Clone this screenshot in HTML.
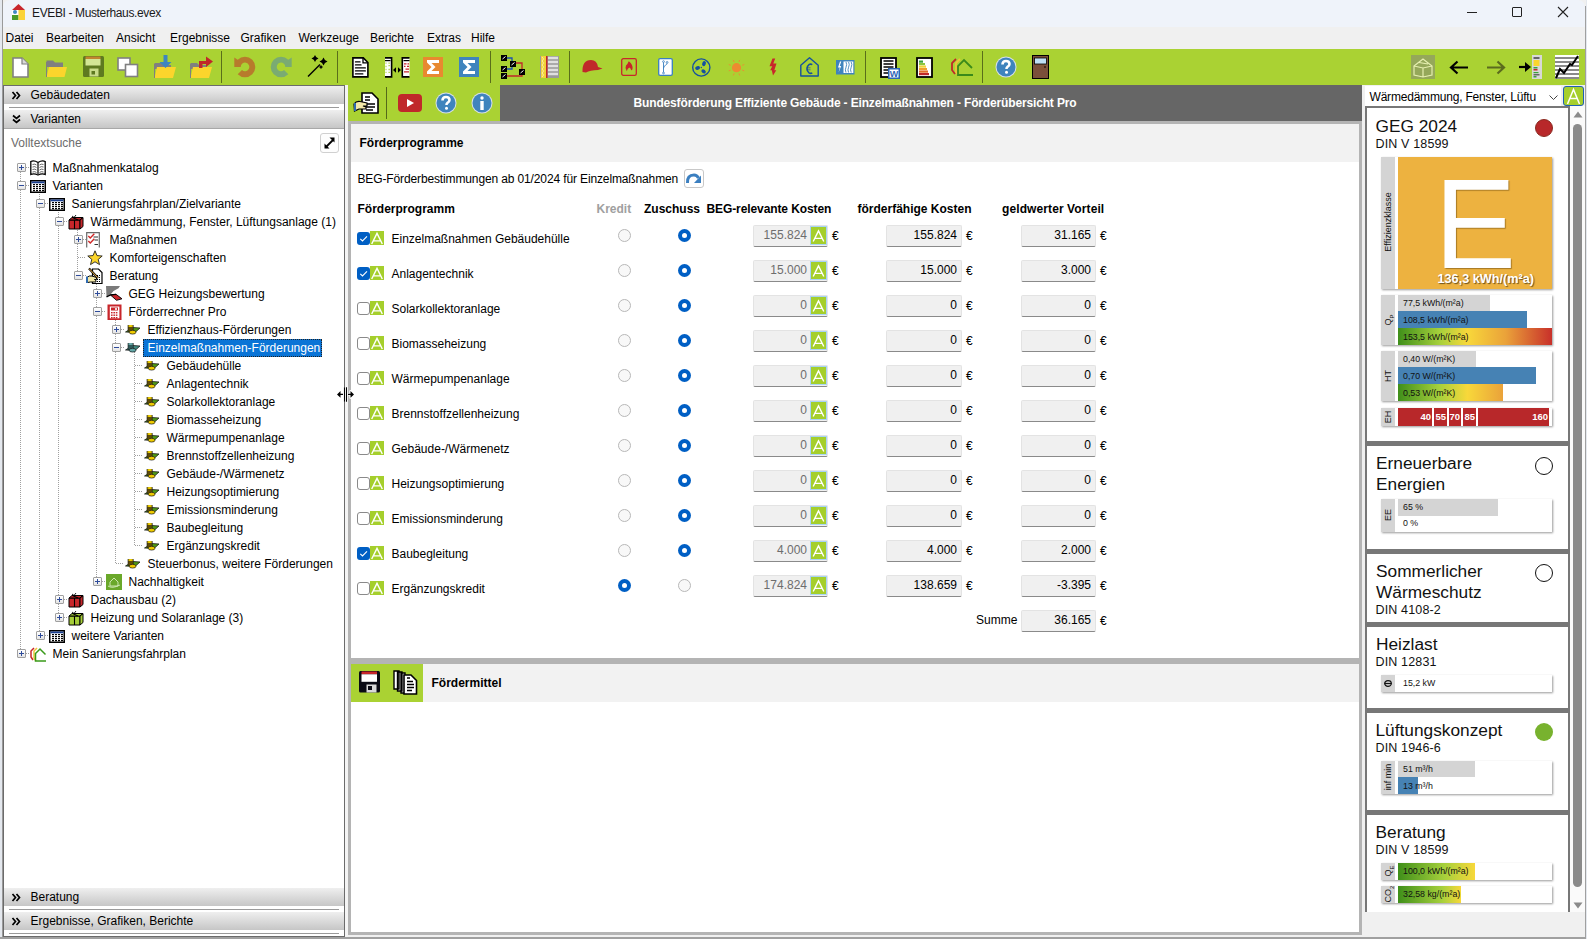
<!DOCTYPE html>
<html><head><meta charset="utf-8">
<style>
*{box-sizing:border-box;margin:0;padding:0}
html,body{width:1587px;height:939px;overflow:hidden;background:#f0f0f0;font-family:"Liberation Sans",sans-serif;font-size:12px;color:#000}
.a{position:absolute}
.t{position:absolute;white-space:nowrap}
svg{position:absolute;overflow:visible}
</style></head><body>
<div class="a" style="left:0px;top:0px;width:3px;height:939px;background:#e4e8ee"></div>
<div class="a" style="left:2px;top:0px;width:1px;height:937px;background:#9a9a9a"></div>
<div class="a" style="left:3px;top:0px;width:1582px;height:27px;background:#eff3fa;border-top-right-radius:7px;border-top-left-radius:7px"></div>
<div class="a" style="left:3px;top:27px;width:1582px;height:22px;background:#f0f0f0"></div>
<div class="a" style="left:3px;top:49px;width:1582px;height:36px;background:#aad233"></div>
<div class="a" style="left:348px;top:85px;width:152px;height:36px;background:#aad233"></div>
<div class="a" style="left:500px;top:85px;width:862px;height:36px;background:#666666"></div>
<div class="a" style="left:0px;top:937px;width:1587px;height:2px;background:#a0a0a0"></div>
<svg style="left:12px;top:4px" width="13" height="16" viewBox="0 0 13 16"><path d="M6.5 0 L13 6 L0 6 Z" fill="#c8262b"/><rect x="0" y="6" width="6.5" height="5" fill="#fff"/><circle cx="3" cy="8" r="2" fill="#3f88c5"/><rect x="0" y="11" width="6.5" height="5" fill="#4a9a2a"/><rect x="6.5" y="6" width="6.5" height="10" fill="#fbd338"/></svg>
<div class="t" style="left:32px;top:7.00px;font-size:12px;line-height:12px;font-weight:400;color:#1a1a1a;letter-spacing:-0.37px">EVEBI - Musterhaus.evex</div>
<div class="a" style="left:1467px;top:12px;width:10px;height:1px;background:#222"></div>
<div class="a" style="left:1512px;top:7px;width:10px;height:10px;border:1px solid #222;border-radius:1px"></div>
<svg style="left:1558px;top:7px" width="10" height="10" viewBox="0 0 10 10"><path d="M0 0L10 10M10 0L0 10" stroke="#222" stroke-width="1.1"/></svg>
<div class="t" style="left:5.5px;top:32.00px;font-size:12px;line-height:12px;font-weight:400;color:#000;">Datei</div>
<div class="t" style="left:46px;top:32.00px;font-size:12px;line-height:12px;font-weight:400;color:#000;">Bearbeiten</div>
<div class="t" style="left:116px;top:32.00px;font-size:12px;line-height:12px;font-weight:400;color:#000;">Ansicht</div>
<div class="t" style="left:170px;top:32.00px;font-size:12px;line-height:12px;font-weight:400;color:#000;">Ergebnisse</div>
<div class="t" style="left:240.5px;top:32.00px;font-size:12px;line-height:12px;font-weight:400;color:#000;">Grafiken</div>
<div class="t" style="left:298.5px;top:32.00px;font-size:12px;line-height:12px;font-weight:400;color:#000;">Werkzeuge</div>
<div class="t" style="left:370px;top:32.00px;font-size:12px;line-height:12px;font-weight:400;color:#000;">Berichte</div>
<div class="t" style="left:427px;top:32.00px;font-size:12px;line-height:12px;font-weight:400;color:#000;">Extras</div>
<div class="t" style="left:471px;top:32.00px;font-size:12px;line-height:12px;font-weight:400;color:#000;">Hilfe</div>
<svg style="left:12px;top:57px" width="17" height="21" viewBox="0 0 17 21"><path d="M1 1H10L16 7V20H1Z" fill="#fff" stroke="#808080" stroke-width="1.6"/><path d="M10 1V7H16" fill="#d8d8d8" stroke="#808080" stroke-width="1.2"/></svg>
<svg style="left:46px;top:60px" width="22" height="18" viewBox="0 0 22 18"><path d="M0.5 0.5H7L9 2.5H17V7H0.5Z" fill="#808080"/><path d="M3 7H21L18.5 17H0.5Z" fill="#fbd52c"/><path d="M0.5 2V17" stroke="#808080"/></svg>
<svg style="left:83px;top:56px" width="21" height="21" viewBox="0 0 21 21"><rect x="0" y="0" width="21" height="21" rx="1.5" fill="#5e7a20"/><rect x="2.5" y="0.5" width="15" height="2.5" fill="#c2842f"/><rect x="2.5" y="3" width="15" height="6.5" fill="#d3e695"/><rect x="6.5" y="12.5" width="9" height="8" fill="#c9dc8a"/><rect x="8.5" y="15" width="3.5" height="3.5" fill="#5e7a20"/></svg>
<svg style="left:117px;top:57px" width="22" height="21" viewBox="0 0 22 21"><rect x="1" y="1" width="12" height="12" fill="#fff" stroke="#808080" stroke-width="1.6"/><rect x="8.5" y="7.5" width="12" height="12" fill="#fff" stroke="#808080" stroke-width="1.6"/></svg>
<svg style="left:154px;top:55px" width="23" height="24" viewBox="0 0 23 24"><path d="M0.5 8H7L9 10H17V14H0.5Z" fill="#808080"/><path d="M3 12H22L19 23H0.5Z" fill="#fbd52c"/><path d="M0.5 9V23" stroke="#808080"/><path d="M9.5 0H13.5V7H17.5L11.5 13L5.5 7H9.5Z" fill="#3d85c0"/></svg>
<svg style="left:190px;top:55px" width="24" height="24" viewBox="0 0 24 24"><path d="M0.5 8H7L9 10H17V14H0.5Z" fill="#808080"/><path d="M3 12H22L19 23H0.5Z" fill="#fbd52c"/><path d="M0.5 9V23" stroke="#808080"/><path d="M9 13V6H16V1.5L23 6.5L16 12V9H12.5V13Z" fill="#c0282a"/></svg>
<div class="a" style="left:221px;top:51px;width:1px;height:32px;background:#5a6e1a"></div>
<svg style="left:233px;top:56px" width="23" height="22" viewBox="0 0 23 22"><path d="M1.3 1.5L4.7 3.7A10.3 10.3 0 1 1 4.7 18.3L9 14A4.3 4.3 0 1 0 7.7 11H1.3Z" fill="#b77b2c"/></svg>
<svg style="left:270px;top:56px" width="23" height="22" viewBox="0 0 23 22"><g transform="translate(23,0) scale(-1,1)"><path d="M1.3 1.5L4.7 3.7A10.3 10.3 0 1 1 4.7 18.3L9 14A4.3 4.3 0 1 0 7.7 11H1.3Z" fill="#7aab72"/></g></svg>
<svg style="left:307px;top:55px" width="22" height="24" viewBox="0 0 22 24"><path d="M1 21.5L13 9.5" stroke="#000" stroke-width="1.5"/><path d="M8 0.0Q8.8 2.7 11.5 3.5Q8.8 4.3 8 7.0Q7.2 4.3 4.5 3.5Q7.2 2.7 8 0.0Z M16.5 2.5Q17.4 5.6 20.5 6.5Q17.4 7.4 16.5 10.5Q15.6 7.4 12.5 6.5Q15.6 5.6 16.5 2.5Z M14 9.8Q14.5 11.5 16.2 12Q14.5 12.5 14 14.2Q13.5 12.5 11.8 12Q13.5 11.5 14 9.8Z" fill="#000"/></svg>
<div class="a" style="left:337px;top:51px;width:1px;height:32px;background:#5a6e1a"></div>
<svg style="left:352px;top:57px" width="17" height="21" viewBox="0 0 17 21"><path d="M0.9 0.9H11.3L15.9 5.5V19.9H0.9Z" fill="#fff" stroke="#000" stroke-width="1.6"/><path d="M11 1V5.8H15.8" fill="none" stroke="#000" stroke-width="1.3"/><path d="M3.5 4.9H8M3.5 7.9H9M3.5 10.9H13.3M3.5 13.9H13.3M3.5 16.9H10.8" stroke="#000" stroke-width="1.4" stroke-linecap="round"/></svg>
<svg style="left:385px;top:57px" width="25" height="21" viewBox="0 0 25 21"><path d="M0 0.9H6.6V19.9H0" fill="#fff" stroke="#000" stroke-width="1.6"/><path d="M0 3.6H5.5" stroke="#000" stroke-width="1.2"/><path d="M0.5 6.2H1.5M3.5 6.2H4.8M0.5 9.5H1.5M3.5 8.7H4.8M0.5 12.5H1.5M3.5 12.5H4.8M0.5 15.3H1.5M3.5 15.3H4.8" stroke="#a6ce39" stroke-width="1.3"/><path d="M24.5 0.9H17.3V19.9H24.5" fill="#fff" stroke="#000" stroke-width="1.6"/><path d="M18.5 3.6H24.5" stroke="#000" stroke-width="1.2"/><path d="M19 6.8H21.5M22.5 6.8H24M19 9.3H20.5M22 9.3H24M20.5 12.2H24M19 14.8H24" stroke="#c8262b" stroke-width="1.3"/><path d="M8 13L11 10.2V15.8Z M16 13L13 10.2V15.8Z" fill="#000"/></svg>
<svg style="left:423px;top:57px" width="20" height="20" viewBox="0 0 20 20"><rect width="20" height="20" fill="#e8892f"/><path d="M4 3H16V6H8.5L12.5 10L8.5 14H16V17H4V14.5L8.5 10L4 5.5Z" fill="#fff"/></svg>
<svg style="left:459px;top:57px" width="20" height="20" viewBox="0 0 20 20"><rect width="20" height="20" fill="#3f84bd"/><path d="M4 3H16V6H8.5L12.5 10L8.5 14H16V17H4V14.5L8.5 10L4 5.5Z" fill="#fff"/></svg>
<div class="a" style="left:490px;top:51px;width:1px;height:32px;background:#5a6e1a"></div>
<svg style="left:501px;top:55px" width="24" height="24" viewBox="0 0 24 24"><path d="M3 3H11V10H12 M3 14H11V10" fill="none" stroke="#1d4fb0" stroke-width="1.3"/><path d="M13 8H21V16 M3 21H21V17" fill="none" stroke="#c0282a" stroke-width="1.3"/><rect x="0" y="0" width="6" height="6" fill="#000"/><rect x="9" y="6" width="6" height="6" fill="#000"/><rect x="0" y="11" width="6" height="6" fill="#000"/><rect x="18" y="14" width="6" height="6" fill="#000"/><rect x="0" y="18" width="6" height="6" fill="#000"/><path d="M1.5 4L4.5 1.5M10.5 10L13.5 7.5M1.5 15L4.5 12.5M19.5 18L22.5 15.5M1.5 22L4.5 19.5" stroke="#fff" stroke-width="1"/></svg>
<svg style="left:540px;top:56px" width="19" height="22" viewBox="0 0 19 22"><rect x="0" y="0" width="19" height="22" fill="#9a9a9a"/><rect x="1" y="0" width="5" height="22" fill="#f1d23a"/><path d="M2 1Q5 3 2 5Q5 7 2 9Q5 11 2 13Q5 15 2 17Q5 19 2 21" fill="none" stroke="#fff2a0" stroke-width="1"/><rect x="6" y="0" width="1.5" height="22" fill="#c0282a"/><path d="M8 2H18M8 6H18M8 10H18M8 14H18M8 18H18" stroke="#e0e0e0" stroke-width="2.5"/></svg>
<div class="a" style="left:569px;top:51px;width:1px;height:32px;background:#5a6e1a"></div>
<svg style="left:582px;top:59px" width="21" height="14" viewBox="0 0 21 14"><path d="M0.5 13Q0 1 9 1Q15 1 16 8L20.5 9.5L16 11Q8 11 4 13.5Z" fill="#c0282a"/></svg>
<svg style="left:621px;top:58px" width="16" height="18" viewBox="0 0 16 18"><rect x="0.7" y="0.7" width="14.6" height="16.6" rx="1.6" fill="none" stroke="#c8262b" stroke-width="1.3"/><path d="M7.8 3.2Q12.3 6.5 11.5 11.2L10.3 12.6Q9.8 10.3 8.3 9.6Q6.3 11 5.8 13.2Q3.6 10.4 5 7.6Q6.8 5.6 7.8 3.2Z" fill="#c8262b"/></svg>
<svg style="left:658px;top:58px" width="15" height="18" viewBox="0 0 15 18"><rect x="0.7" y="0.7" width="13.6" height="16.6" rx="1.4" fill="#fff" stroke="#3b7fc0" stroke-width="1.3"/><path d="M5.5 4.5V14.2M5.5 10.5Q5.5 8.3 7.5 7.3Q9 6.5 9 5.3" fill="none" stroke="#3b7fc0" stroke-width="0.9"/><circle cx="5.5" cy="3.6" r="0.9" fill="none" stroke="#3b7fc0" stroke-width="0.8"/><circle cx="5.5" cy="15" r="0.9" fill="none" stroke="#3b7fc0" stroke-width="0.8"/><circle cx="9.1" cy="4.4" r="0.9" fill="none" stroke="#3b7fc0" stroke-width="0.8"/></svg>
<svg style="left:692px;top:58px" width="19" height="19" viewBox="0 0 19 19"><circle cx="9.3" cy="9.5" r="8.6" fill="none" stroke="#1550a0" stroke-width="1.4"/><ellipse cx="12" cy="5.6" rx="1.8" ry="2.6" transform="rotate(20 12 5.6)" fill="#1550a0"/><ellipse cx="5.6" cy="10" rx="2.5" ry="1.8" transform="rotate(-20 5.6 10)" fill="#1550a0"/><ellipse cx="11.6" cy="13.4" rx="2.4" ry="1.8" transform="rotate(40 11.6 13.4)" fill="#1550a0"/><circle cx="9.3" cy="9.5" r="0.7" fill="#1550a0"/></svg>
<svg style="left:728px;top:58px" width="18" height="19" viewBox="0 0 18 19"><circle cx="8.5" cy="9.7" r="4.6" fill="#ee8a30"/><path d="M14.23 12.07L16.26 12.91M10.87 15.43L11.71 17.46M6.13 15.43L5.29 17.46M2.77 12.07L0.74 12.91M2.77 7.33L0.74 6.49M6.13 3.97L5.29 1.94M10.87 3.97L11.71 1.94M14.23 7.33L16.26 6.49" stroke="#ee8a30" stroke-width="0.9"/></svg>
<svg style="left:768px;top:58px" width="10" height="18" viewBox="0 0 10 18"><path d="M4.5 0.5L1.5 8.2H4.3L2.2 12.2H3.8L5 17.5L8.3 12.2H6.3L8.5 5.5H5.3L7.2 0.5Z" fill="#c8262b"/></svg>
<svg style="left:800px;top:57px" width="19" height="20" viewBox="0 0 19 20"><path d="M0.8 19V8.2L9.5 0.8L18.2 8.2V19Z" fill="none" stroke="#1550a0" stroke-width="1.4" stroke-linejoin="round"/><path d="M12.3 7.6Q10.5 6.7 9 7.7Q7 9.2 7 11.8Q7 14.4 9 15.9Q10.5 16.8 12.3 16" fill="none" stroke="#1550a0" stroke-width="1.6"/><path d="M6.5 10.8H10.5M6.5 12.8H10.5" stroke="#1550a0" stroke-width="0.7"/></svg>
<svg style="left:836px;top:60px" width="19" height="15" viewBox="0 0 19 15"><rect width="18.5" height="14.5" fill="#3f84bd"/><path d="M4 1.5L2 7.5H3.8L2.6 12.5L5.2 6H3.7L5.3 1.5Z" fill="#fff"/><rect x="7.5" y="1.5" width="9.8" height="11.5" fill="#fff"/><path d="M10 2Q11.3 4.5 10 7.2Q8.7 9.8 10 12.5M12.6 2Q13.9 4.5 12.6 7.2Q11.3 9.8 12.6 12.5M15.2 2Q16.5 4.5 15.2 7.2Q13.9 9.8 15.2 12.5" fill="none" stroke="#3f84bd" stroke-width="0.9"/></svg>
<div class="a" style="left:865px;top:51px;width:1px;height:32px;background:#5a6e1a"></div>
<svg style="left:880px;top:57px" width="20" height="22" viewBox="0 0 20 22"><rect x="1" y="1" width="15" height="19" fill="#fff" stroke="#000" stroke-width="1.8"/><path d="M3.5 4H13.5M3.5 7H13.5M3.5 10H13.5M3.5 13H8M3.5 16H8" stroke="#000" stroke-width="1.6"/><rect x="8" y="11" width="12" height="11" fill="#2d66b5"/><rect x="9" y="12" width="10" height="9" fill="#fff" stroke="#2d66b5"/><text x="14" y="20" font-size="9" font-weight="700" font-family="Liberation Sans" fill="#2d66b5" text-anchor="middle">W</text></svg>
<svg style="left:916px;top:57px" width="17" height="21" viewBox="0 0 17 21"><rect x="1" y="1" width="15" height="19" fill="#fff" stroke="#000" stroke-width="1.8"/><rect x="3" y="3.5" width="4" height="2.2" fill="#3aa23a"/><rect x="3" y="6" width="6" height="2.2" fill="#8dc63f"/><rect x="3" y="8.5" width="7" height="2.2" fill="#f1d23a"/><rect x="3" y="11" width="8" height="2.2" fill="#f0a030"/><rect x="3" y="13.5" width="9" height="2.2" fill="#e36c2a"/><rect x="3" y="16" width="10" height="2.2" fill="#c0282a"/></svg>
<svg style="left:950px;top:57px" width="24" height="20" viewBox="0 0 24 20"><path d="M6 2L2 6V13L5 17" fill="none" stroke="#c0282a" stroke-width="1.8"/><path d="M10 2L6 6V15L9 19" fill="none" stroke="#f1c43a" stroke-width="1.8"/><path d="M22 11L14 3L8 9V18H23" fill="none" stroke="#3a8a1a" stroke-width="1.8"/></svg>
<div class="a" style="left:982px;top:51px;width:1px;height:32px;background:#5a6e1a"></div>
<svg style="left:995px;top:56px" width="22" height="22" viewBox="0 0 22 22"><circle cx="11" cy="11" r="10.5" fill="#d8e0e8"/><circle cx="11" cy="11" r="9.5" fill="#3f84bd"/><path d="M7.5 8.5Q7.5 5 11 5Q14.5 5 14.5 8Q14.5 10 12.3 11Q11.5 11.5 11.5 13" fill="none" stroke="#fff" stroke-width="2.6"/><circle cx="11.5" cy="16.3" r="1.5" fill="#fff"/></svg>
<svg style="left:1032px;top:55px" width="17" height="24" viewBox="0 0 17 24"><rect x="0.5" y="0.5" width="16" height="23" fill="#7a4f3a" stroke="#000" stroke-width="1"/><rect x="2.5" y="3" width="12" height="6" fill="#bfe0f5" stroke="#000" stroke-width="0.8"/><path d="M12 12H14" stroke="#000" stroke-width="1"/></svg>
<svg style="left:1411px;top:55px" width="24" height="24" viewBox="0 0 24 24"><rect width="24" height="24" fill="#95a85a"/><path d="M3 11L12 4L21 11V20L12 22L3 20Z M3 11L12 13L21 11 M12 13V22 M8 7.5L17 9" fill="none" stroke="#e6efb0" stroke-width="1.2"/></svg>
<svg style="left:1449px;top:60px" width="20" height="15" viewBox="0 0 20 15"><path d="M19 7.5H3M8.5 1.5L2 7.5L8.5 13.5" fill="none" stroke="#000" stroke-width="2.2"/></svg>
<svg style="left:1486px;top:60px" width="20" height="15" viewBox="0 0 20 15"><path d="M1 7.5H17M11.5 1.5L18 7.5L11.5 13.5" fill="none" stroke="#5b6b1e" stroke-width="2.2"/></svg>
<svg style="left:1519px;top:55px" width="24" height="24" viewBox="0 0 24 24"><path d="M0 12H7" stroke="#000" stroke-width="2.2"/><path d="M6 7L12 12L6 17Z" fill="#000"/><rect x="13" y="0" width="10" height="24" fill="#d8d8d8"/><rect x="14.5" y="2" width="6" height="2" fill="#666"/><rect x="14.5" y="5" width="6" height="6" fill="#fbd52c"/><rect x="14.5" y="12" width="4" height="1.5" fill="#3aa23a"/><rect x="14.5" y="14" width="4" height="1.5" fill="#c0282a"/><rect x="14.5" y="17" width="5" height="1.2" fill="#3aa23a"/><rect x="14.5" y="19" width="6" height="1.5" fill="#666"/><rect x="14.5" y="21" width="3" height="1.5" fill="#3aa23a"/></svg>
<svg style="left:1555px;top:55px" width="25" height="24" viewBox="0 0 25 24"><rect width="24" height="24" fill="#fff"/><path d="M0 3H24M0 7H24M0 11H24M0 15H24M0 19H24M0 23H24" stroke="#8a8a8a" stroke-width="1.8"/><path d="M1 23L5 14L9 18L15 9L17 10L23 1" fill="none" stroke="#000" stroke-width="2"/></svg>
<svg style="left:354px;top:92px" width="25" height="22" viewBox="0 0 25 22"><path d="M8 1H18L24 7V21H8Z" fill="#fff" stroke="#000" stroke-width="1.6"/><path d="M11 5H16M11 8H16M12 12H21M12 15H21M12 18H19" stroke="#000" stroke-width="1.3"/><path d="M0 12Q2 9 6 9.5L13 11V14H9L12 15V17H5L0.5 19Z" fill="#f3e8a8" stroke="#000" stroke-width="1.2"/><rect x="0" y="11" width="2" height="8" fill="#2f6ab0"/></svg>
<div class="a" style="left:386px;top:87px;width:1px;height:32px;background:#55691a"></div>
<svg style="left:398px;top:94px" width="24" height="18" viewBox="0 0 24 18"><rect width="24" height="18" rx="4" fill="#c0282a"/><path d="M9 5L16 9L9 13Z" fill="#fff"/></svg>
<svg style="left:435px;top:92px" width="22" height="22" viewBox="0 0 22 22"><circle cx="11" cy="11" r="10.5" fill="#d8e0e8"/><circle cx="11" cy="11" r="9.5" fill="#3f84bd"/><path d="M7.5 8.5Q7.5 5 11 5Q14.5 5 14.5 8Q14.5 10 12.3 11Q11.5 11.5 11.5 13" fill="none" stroke="#fff" stroke-width="2.6"/><circle cx="11.5" cy="16.3" r="1.5" fill="#fff"/></svg>
<svg style="left:471px;top:92px" width="22" height="22" viewBox="0 0 22 22"><circle cx="11" cy="11" r="10.5" fill="#d8e0e8"/><circle cx="11" cy="11" r="9.5" fill="#3f84bd"/><circle cx="11" cy="6" r="1.7" fill="#fff"/><rect x="9.3" y="9" width="3.4" height="9" fill="#fff"/></svg>
<div class="a" style="left:3px;top:85px;width:342px;height:852px;background:#fff;border:1px solid #6b6b6b"></div>
<div class="a" style="left:345px;top:85px;width:3px;height:852px;background:#f4f4f4"></div>
<div class="a" style="left:4px;top:86px;width:340px;height:18px;background:linear-gradient(#efefef,#c6c6c6)"></div><div class="a" style="left:9px;top:107px;width:330px;height:1px;background:#9a9a9a"></div><svg style="left:12px;top:91px" width="10" height="9" viewBox="0 0 10 9"><path d="M0.5 1L3.5 4.5L0.5 8M4.5 1L7.5 4.5L4.5 8" fill="none" stroke="#000" stroke-width="1.7"/></svg><div class="t" style="left:30.5px;top:89.00px;font-size:12px;line-height:12px;font-weight:400;color:#000;">Gebäudedaten</div>
<div class="a" style="left:4px;top:110px;width:340px;height:18px;background:linear-gradient(#efefef,#c6c6c6)"></div><div class="a" style="left:9px;top:131px;display:none;width:330px;height:1px;background:#9a9a9a"></div><svg style="left:12px;top:115px" width="9" height="9" viewBox="0 0 9 9"><path d="M1 0.5L4.5 3.5L8 0.5M1 4.5L4.5 7.5L8 4.5" fill="none" stroke="#000" stroke-width="1.7"/></svg><div class="t" style="left:30.5px;top:113.00px;font-size:12px;line-height:12px;font-weight:400;color:#000;">Varianten</div>
<div class="a" style="left:4px;top:128px;width:340px;height:1px;background:#a8a8a8"></div>
<div class="a" style="left:4px;top:888px;width:340px;height:18px;background:linear-gradient(#efefef,#c6c6c6)"></div><div class="a" style="left:9px;top:909px;width:330px;height:1px;background:#9a9a9a"></div><svg style="left:12px;top:893px" width="10" height="9" viewBox="0 0 10 9"><path d="M0.5 1L3.5 4.5L0.5 8M4.5 1L7.5 4.5L4.5 8" fill="none" stroke="#000" stroke-width="1.7"/></svg><div class="t" style="left:30.5px;top:891.00px;font-size:12px;line-height:12px;font-weight:400;color:#000;">Beratung</div>
<div class="a" style="left:4px;top:912px;width:340px;height:18px;background:linear-gradient(#efefef,#c6c6c6)"></div><div class="a" style="left:9px;top:933px;width:330px;height:1px;background:#9a9a9a"></div><svg style="left:12px;top:917px" width="10" height="9" viewBox="0 0 10 9"><path d="M0.5 1L3.5 4.5L0.5 8M4.5 1L7.5 4.5L4.5 8" fill="none" stroke="#000" stroke-width="1.7"/></svg><div class="t" style="left:30.5px;top:915.00px;font-size:12px;line-height:12px;font-weight:400;color:#000;">Ergebnisse, Grafiken, Berichte</div>
<div class="t" style="left:11px;top:137.00px;font-size:12px;line-height:12px;font-weight:400;color:#6d6d6d;">Volltextsuche</div>
<div class="a" style="left:320px;top:133px;width:19px;height:20px;border:1px solid #d0d0d0;border-radius:3px;background:#fdfdfd"></div>
<svg style="left:324px;top:137px" width="11" height="12" viewBox="0 0 11 12"><path d="M1.5 10.5L9.5 2.5" stroke="#000" stroke-width="1.8"/><path d="M0.5 6.5V11.5H5.5Z M10.5 5.5V0.5H5.5Z" fill="#000"/></svg>
<div class="a" style="left:39px;top:190px;width:1px;height:446px;background:repeating-linear-gradient(to bottom,#a0a0a0 0,#a0a0a0 1px,transparent 1px,transparent 2px)"></div>
<div class="a" style="left:58px;top:208px;width:1px;height:410px;background:repeating-linear-gradient(to bottom,#a0a0a0 0,#a0a0a0 1px,transparent 1px,transparent 2px)"></div>
<div class="a" style="left:77px;top:226px;width:1px;height:50px;background:repeating-linear-gradient(to bottom,#a0a0a0 0,#a0a0a0 1px,transparent 1px,transparent 2px)"></div>
<div class="a" style="left:96px;top:280px;width:1px;height:302px;background:repeating-linear-gradient(to bottom,#a0a0a0 0,#a0a0a0 1px,transparent 1px,transparent 2px)"></div>
<div class="a" style="left:115px;top:316px;width:1px;height:248px;background:repeating-linear-gradient(to bottom,#a0a0a0 0,#a0a0a0 1px,transparent 1px,transparent 2px)"></div>
<div class="a" style="left:134px;top:352px;width:1px;height:194px;background:repeating-linear-gradient(to bottom,#a0a0a0 0,#a0a0a0 1px,transparent 1px,transparent 2px)"></div>
<div class="a" style="left:20px;top:172px;width:1px;height:477px;background:repeating-linear-gradient(to bottom,#a0a0a0 0,#a0a0a0 1px,transparent 1px,transparent 2px)"></div>
<div class="a" style="left:26px;top:167px;width:3px;height:1px;background:repeating-linear-gradient(to right,#a0a0a0 0,#a0a0a0 1px,transparent 1px,transparent 2px)"></div>
<div class="a" style="left:17px;top:163px;width:9px;height:9px;border:1px solid #a0a0a0;border-radius:1px;background:linear-gradient(#fff,#e4e4e4)"></div><div class="a" style="left:19px;top:167px;width:5px;height:1px;background:#2e4b9a"></div><div class="a" style="left:21px;top:165px;width:1px;height:5px;background:#2e4b9a"></div>
<svg style="left:30px;top:160px" width="16" height="16" viewBox="0 0 16 16"><path d="M8 2.5Q4 0 0.8 1.5V14.5Q4 13 8 15Q12 13 15.2 14.5V1.5Q12 0 8 2.5Z" fill="#fff" stroke="#000" stroke-width="1.3"/><path d="M8 2.5V15" stroke="#333" stroke-width="1.5"/><path d="M2.5 4.5Q5 3.5 6.5 5M2.5 7Q5 6 6.5 7.5M2.5 9.5Q5 8.5 6.5 10M2.5 12Q5 11 6.5 12.5M9.5 5Q11 3.5 13.5 4.5M9.5 7.5Q11 6 13.5 7M9.5 10Q11 8.5 13.5 9.5M9.5 12.5Q11 11 13.5 12" fill="none" stroke="#444" stroke-width="0.8"/></svg>
<div class="t" style="left:52.5px;top:162.00px;font-size:12px;line-height:12px;font-weight:400;color:#000;">Maßnahmenkatalog</div>
<div class="a" style="left:26px;top:185px;width:3px;height:1px;background:repeating-linear-gradient(to right,#a0a0a0 0,#a0a0a0 1px,transparent 1px,transparent 2px)"></div>
<div class="a" style="left:17px;top:181px;width:9px;height:9px;border:1px solid #a0a0a0;border-radius:1px;background:linear-gradient(#fff,#e4e4e4)"></div><div class="a" style="left:19px;top:185px;width:5px;height:1px;background:#2e4b9a"></div>
<svg style="left:30px;top:180px" width="16" height="14" viewBox="0 0 16 14"><rect x="0.75" y="0.75" width="14.5" height="11.5" fill="#fff" stroke="#000" stroke-width="1.5"/><rect x="1.5" y="1.5" width="13" height="1.8" fill="#1a3f8f"/><rect x="3" y="4" width="2" height="1.2" fill="#000"/><rect x="6" y="4" width="2" height="1.2" fill="#000"/><rect x="9" y="4" width="2" height="1.2" fill="#000"/><rect x="12" y="4" width="2" height="1.2" fill="#000"/><rect x="3" y="6" width="2" height="1.2" fill="#000"/><rect x="6" y="6" width="2" height="1.2" fill="#000"/><rect x="9" y="6" width="2" height="1.2" fill="#000"/><rect x="12" y="6" width="2" height="1.2" fill="#000"/><rect x="3" y="8" width="2" height="1.2" fill="#000"/><rect x="6" y="8" width="2" height="1.2" fill="#000"/><rect x="9" y="8" width="2" height="1.2" fill="#000"/><rect x="12" y="8" width="2" height="1.2" fill="#000"/><rect x="3" y="10" width="2" height="1.2" fill="#000"/><rect x="6" y="10" width="2" height="1.2" fill="#000"/><rect x="9" y="10" width="2" height="1.2" fill="#000"/><rect x="12" y="10" width="2" height="1.2" fill="#000"/></svg>
<div class="t" style="left:52.5px;top:180.00px;font-size:12px;line-height:12px;font-weight:400;color:#000;">Varianten</div>
<div class="a" style="left:45px;top:203px;width:3px;height:1px;background:repeating-linear-gradient(to right,#a0a0a0 0,#a0a0a0 1px,transparent 1px,transparent 2px)"></div>
<div class="a" style="left:36px;top:199px;width:9px;height:9px;border:1px solid #a0a0a0;border-radius:1px;background:linear-gradient(#fff,#e4e4e4)"></div><div class="a" style="left:38px;top:203px;width:5px;height:1px;background:#2e4b9a"></div>
<svg style="left:49px;top:198px" width="16" height="14" viewBox="0 0 16 14"><rect x="0.75" y="0.75" width="14.5" height="11.5" fill="#fff" stroke="#000" stroke-width="1.5"/><rect x="1.5" y="1.5" width="13" height="1.8" fill="#1a3f8f"/><rect x="3" y="4" width="2" height="1.2" fill="#000"/><rect x="6" y="4" width="2" height="1.2" fill="#000"/><rect x="9" y="4" width="2" height="1.2" fill="#000"/><rect x="12" y="4" width="2" height="1.2" fill="#000"/><rect x="3" y="6" width="2" height="1.2" fill="#000"/><rect x="6" y="6" width="2" height="1.2" fill="#000"/><rect x="9" y="6" width="2" height="1.2" fill="#000"/><rect x="12" y="6" width="2" height="1.2" fill="#000"/><rect x="3" y="8" width="2" height="1.2" fill="#000"/><rect x="6" y="8" width="2" height="1.2" fill="#000"/><rect x="9" y="8" width="2" height="1.2" fill="#000"/><rect x="12" y="8" width="2" height="1.2" fill="#000"/><rect x="3" y="10" width="2" height="1.2" fill="#000"/><rect x="6" y="10" width="2" height="1.2" fill="#000"/><rect x="9" y="10" width="2" height="1.2" fill="#000"/><rect x="12" y="10" width="2" height="1.2" fill="#000"/></svg>
<div class="t" style="left:71.5px;top:198.00px;font-size:12px;line-height:12px;font-weight:400;color:#000;">Sanierungsfahrplan/Zielvariante</div>
<div class="a" style="left:64px;top:221px;width:3px;height:1px;background:repeating-linear-gradient(to right,#a0a0a0 0,#a0a0a0 1px,transparent 1px,transparent 2px)"></div>
<div class="a" style="left:55px;top:217px;width:9px;height:9px;border:1px solid #a0a0a0;border-radius:1px;background:linear-gradient(#fff,#e4e4e4)"></div><div class="a" style="left:57px;top:221px;width:5px;height:1px;background:#2e4b9a"></div>
<svg style="left:68px;top:214px" width="16" height="16" viewBox="0 0 16 16"><path d="M1 6H12V15H1Z" fill="#c8262b" stroke="#000" stroke-width="1"/><path d="M1 6L4 3.5H15L12 6Z M12 6L15 3.5V12.5L12 15Z" fill="#c8262b" stroke="#000" stroke-width="1"/><path d="M6.5 6V15M4.5 3.5L10 6" stroke="#000" stroke-width="1.1"/><path d="M4 2L6 3.5L8 1" fill="none" stroke="#000" stroke-width="0.9"/></svg>
<div class="t" style="left:90.5px;top:216.00px;font-size:12px;line-height:12px;font-weight:400;color:#000;">Wärmedämmung, Fenster, Lüftungsanlage (1)</div>
<div class="a" style="left:83px;top:239px;width:3px;height:1px;background:repeating-linear-gradient(to right,#a0a0a0 0,#a0a0a0 1px,transparent 1px,transparent 2px)"></div>
<div class="a" style="left:74px;top:235px;width:9px;height:9px;border:1px solid #a0a0a0;border-radius:1px;background:linear-gradient(#fff,#e4e4e4)"></div><div class="a" style="left:76px;top:239px;width:5px;height:1px;background:#2e4b9a"></div><div class="a" style="left:78px;top:237px;width:1px;height:5px;background:#2e4b9a"></div>
<svg style="left:86px;top:232px" width="16" height="16" viewBox="0 0 16 16"><path d="M0.7 15.5V0.7H13.3V15.5" fill="#fff" stroke="#6a6a6a" stroke-width="1.2"/><path d="M2.3 4L4.3 6L8.3 1.8M2.3 9L4.3 11L8.3 6.8" fill="none" stroke="#d02828" stroke-width="1.4"/><path d="M7.5 5H12M8.5 8H12M8.5 12.5H12" stroke="#333" stroke-width="1.1"/></svg>
<div class="t" style="left:109.5px;top:234.00px;font-size:12px;line-height:12px;font-weight:400;color:#000;">Maßnahmen</div>
<div class="a" style="left:78px;top:257px;width:8px;height:1px;background:repeating-linear-gradient(to right,#a0a0a0 0,#a0a0a0 1px,transparent 1px,transparent 2px)"></div>
<svg style="left:87px;top:250px" width="16" height="16" viewBox="0 0 16 16"><path d="M8 0.8L10 5.6L15.2 6L11.2 9.4L12.5 14.6L8 11.8L3.5 14.6L4.8 9.4L0.8 6L6 5.6Z" fill="#fbd52c" stroke="#222" stroke-width="0.9"/></svg>
<div class="t" style="left:109.5px;top:252.00px;font-size:12px;line-height:12px;font-weight:400;color:#000;">Komforteigenschaften</div>
<div class="a" style="left:83px;top:275px;width:3px;height:1px;background:repeating-linear-gradient(to right,#a0a0a0 0,#a0a0a0 1px,transparent 1px,transparent 2px)"></div>
<div class="a" style="left:74px;top:271px;width:9px;height:9px;border:1px solid #a0a0a0;border-radius:1px;background:linear-gradient(#fff,#e4e4e4)"></div><div class="a" style="left:76px;top:275px;width:5px;height:1px;background:#2e4b9a"></div>
<svg style="left:86px;top:268px" width="17" height="16" viewBox="0 0 17 16"><path d="M6.5 1H12.5L16 4.5V15.5H6.5Z" fill="#fff" stroke="#000" stroke-width="1.2"/><rect x="9" y="7" width="1" height="1" fill="#000"/><rect x="9" y="9" width="1" height="1" fill="#000"/><rect x="9" y="11" width="1" height="1" fill="#000"/><rect x="9" y="13" width="1" height="1" fill="#000"/><rect x="11" y="7" width="1" height="1" fill="#000"/><rect x="11" y="9" width="1" height="1" fill="#000"/><rect x="11" y="11" width="1" height="1" fill="#000"/><rect x="11" y="13" width="1" height="1" fill="#000"/><rect x="13" y="7" width="1" height="1" fill="#000"/><rect x="13" y="9" width="1" height="1" fill="#000"/><rect x="13" y="11" width="1" height="1" fill="#000"/><rect x="13" y="13" width="1" height="1" fill="#000"/><path d="M3 0.5L12 10" stroke="#000" stroke-width="2.2"/><path d="M3.3 0.8L11.7 9.7" stroke="#f0b040" stroke-width="1"/><path d="M1.5 9Q3 7.5 6 8L10.5 9.5V11.5H8.5L10 12.5V14H4.5L1.5 14.5Z" fill="#f3e8a8" stroke="#000" stroke-width="1"/><rect x="0" y="8.5" width="2" height="6.5" fill="#2f6ab0"/></svg>
<div class="t" style="left:109.5px;top:270.00px;font-size:12px;line-height:12px;font-weight:400;color:#000;">Beratung</div>
<div class="a" style="left:102px;top:293px;width:3px;height:1px;background:repeating-linear-gradient(to right,#a0a0a0 0,#a0a0a0 1px,transparent 1px,transparent 2px)"></div>
<div class="a" style="left:93px;top:289px;width:9px;height:9px;border:1px solid #a0a0a0;border-radius:1px;background:linear-gradient(#fff,#e4e4e4)"></div><div class="a" style="left:95px;top:293px;width:5px;height:1px;background:#2e4b9a"></div><div class="a" style="left:97px;top:291px;width:1px;height:5px;background:#2e4b9a"></div>
<svg style="left:106px;top:286px" width="16" height="16" viewBox="0 0 16 16"><path d="M0 0H14L12.5 2.3Q8 4 5 8L0.5 10.5Z" fill="#7a7a7a"/><path d="M4.5 9L10 8.3L16 12.8L10.5 14.3Z" fill="#c8262b" stroke="#000" stroke-width="0.9" stroke-linejoin="round"/><path d="M0.5 10.8L4.5 8.8L10 8.3" fill="none" stroke="#000" stroke-width="1.3"/></svg>
<div class="t" style="left:128.5px;top:288.00px;font-size:12px;line-height:12px;font-weight:400;color:#000;">GEG Heizungsbewertung</div>
<div class="a" style="left:102px;top:311px;width:3px;height:1px;background:repeating-linear-gradient(to right,#a0a0a0 0,#a0a0a0 1px,transparent 1px,transparent 2px)"></div>
<div class="a" style="left:93px;top:307px;width:9px;height:9px;border:1px solid #a0a0a0;border-radius:1px;background:linear-gradient(#fff,#e4e4e4)"></div><div class="a" style="left:95px;top:311px;width:5px;height:1px;background:#2e4b9a"></div>
<svg style="left:106px;top:304px" width="16" height="16" viewBox="0 0 16 16"><rect x="1.5" y="0.5" width="14" height="15.5" fill="#c8262b"/><rect x="3.8" y="2.5" width="9.6" height="11.8" fill="#fff"/><rect x="5" y="3.5" width="7" height="3" fill="#c8262b"/><rect x="9" y="4.2" width="2" height="1.6" fill="#fff"/><rect x="5" y="8" width="1.6" height="1.4" fill="#c8262b"/><rect x="5" y="10.5" width="1.6" height="1.4" fill="#c8262b"/><rect x="5" y="13" width="1.6" height="1.4" fill="#c8262b"/><rect x="7.4" y="8" width="1.6" height="1.4" fill="#c8262b"/><rect x="7.4" y="10.5" width="1.6" height="1.4" fill="#c8262b"/><rect x="7.4" y="13" width="1.6" height="1.4" fill="#c8262b"/><rect x="9.8" y="8" width="1.6" height="1.4" fill="#c8262b"/><rect x="9.8" y="10.5" width="1.6" height="1.4" fill="#c8262b"/><rect x="9.8" y="13" width="1.6" height="1.4" fill="#c8262b"/></svg>
<div class="t" style="left:128.5px;top:306.00px;font-size:12px;line-height:12px;font-weight:400;color:#000;">Förderrechner Pro</div>
<div class="a" style="left:121px;top:329px;width:3px;height:1px;background:repeating-linear-gradient(to right,#a0a0a0 0,#a0a0a0 1px,transparent 1px,transparent 2px)"></div>
<div class="a" style="left:112px;top:325px;width:9px;height:9px;border:1px solid #a0a0a0;border-radius:1px;background:linear-gradient(#fff,#e4e4e4)"></div><div class="a" style="left:114px;top:329px;width:5px;height:1px;background:#2e4b9a"></div><div class="a" style="left:116px;top:327px;width:1px;height:5px;background:#2e4b9a"></div>
<svg style="left:124px;top:324px" width="17" height="12" viewBox="0 0 17 12"><path d="M1.5 8L9 3.5L16 4L11 8.5Z" fill="#4f9a14" stroke="#1a1a1a" stroke-width="0.8" stroke-linejoin="round"/><rect x="4" y="1.3" width="5.2" height="6" fill="#5e4c08" stroke="#1a1a1a" stroke-width="0.6"/><ellipse cx="6.6" cy="2" rx="2.4" ry="1.1" fill="#f5d400"/><ellipse cx="8.6" cy="8.2" rx="3.4" ry="1.9" fill="#e9c400" stroke="#1a1a1a" stroke-width="0.7"/><path d="M6 8.2H11" stroke="#f5d400" stroke-width="0.8"/></svg>
<div class="t" style="left:147.5px;top:324.00px;font-size:12px;line-height:12px;font-weight:400;color:#000;">Effizienzhaus-Förderungen</div>
<div class="a" style="left:121px;top:347px;width:3px;height:1px;background:repeating-linear-gradient(to right,#a0a0a0 0,#a0a0a0 1px,transparent 1px,transparent 2px)"></div>
<div class="a" style="left:112px;top:343px;width:9px;height:9px;border:1px solid #a0a0a0;border-radius:1px;background:linear-gradient(#fff,#e4e4e4)"></div><div class="a" style="left:114px;top:347px;width:5px;height:1px;background:#2e4b9a"></div>
<svg style="left:124px;top:342px" width="17" height="12" viewBox="0 0 17 12"><path d="M1.5 8L9 3.5L16 4L11 8.5Z" fill="#3f8a80" stroke="#1a1a1a" stroke-width="0.8" stroke-linejoin="round"/><rect x="4" y="1.3" width="5.2" height="6" fill="#2f5a5a" stroke="#1a1a1a" stroke-width="0.6"/><ellipse cx="6.6" cy="2" rx="2.4" ry="1.1" fill="#6fb0b0"/><ellipse cx="8.6" cy="8.2" rx="3.4" ry="1.9" fill="#5aa0a0" stroke="#1a1a1a" stroke-width="0.7"/><path d="M6 8.2H11" stroke="#6fb0b0" stroke-width="0.8"/></svg>
<div class="a" style="left:143px;top:339px;width:179px;height:18px;background:#0a74d6;outline:1px dotted #222;outline-offset:-1px"></div>
<div class="t" style="left:147.5px;top:342.00px;font-size:12px;line-height:12px;font-weight:400;color:#fff;">Einzelmaßnahmen-Förderungen</div>
<div class="a" style="left:135px;top:365px;width:8px;height:1px;background:repeating-linear-gradient(to right,#a0a0a0 0,#a0a0a0 1px,transparent 1px,transparent 2px)"></div>
<svg style="left:143px;top:360px" width="17" height="12" viewBox="0 0 17 12"><path d="M1.5 8L9 3.5L16 4L11 8.5Z" fill="#4f9a14" stroke="#1a1a1a" stroke-width="0.8" stroke-linejoin="round"/><rect x="4" y="1.3" width="5.2" height="6" fill="#5e4c08" stroke="#1a1a1a" stroke-width="0.6"/><ellipse cx="6.6" cy="2" rx="2.4" ry="1.1" fill="#f5d400"/><ellipse cx="8.6" cy="8.2" rx="3.4" ry="1.9" fill="#e9c400" stroke="#1a1a1a" stroke-width="0.7"/><path d="M6 8.2H11" stroke="#f5d400" stroke-width="0.8"/></svg>
<div class="t" style="left:166.5px;top:360.00px;font-size:12px;line-height:12px;font-weight:400;color:#000;">Gebäudehülle</div>
<div class="a" style="left:135px;top:383px;width:8px;height:1px;background:repeating-linear-gradient(to right,#a0a0a0 0,#a0a0a0 1px,transparent 1px,transparent 2px)"></div>
<svg style="left:143px;top:378px" width="17" height="12" viewBox="0 0 17 12"><path d="M1.5 8L9 3.5L16 4L11 8.5Z" fill="#4f9a14" stroke="#1a1a1a" stroke-width="0.8" stroke-linejoin="round"/><rect x="4" y="1.3" width="5.2" height="6" fill="#5e4c08" stroke="#1a1a1a" stroke-width="0.6"/><ellipse cx="6.6" cy="2" rx="2.4" ry="1.1" fill="#f5d400"/><ellipse cx="8.6" cy="8.2" rx="3.4" ry="1.9" fill="#e9c400" stroke="#1a1a1a" stroke-width="0.7"/><path d="M6 8.2H11" stroke="#f5d400" stroke-width="0.8"/></svg>
<div class="t" style="left:166.5px;top:378.00px;font-size:12px;line-height:12px;font-weight:400;color:#000;">Anlagentechnik</div>
<div class="a" style="left:135px;top:401px;width:8px;height:1px;background:repeating-linear-gradient(to right,#a0a0a0 0,#a0a0a0 1px,transparent 1px,transparent 2px)"></div>
<svg style="left:143px;top:396px" width="17" height="12" viewBox="0 0 17 12"><path d="M1.5 8L9 3.5L16 4L11 8.5Z" fill="#4f9a14" stroke="#1a1a1a" stroke-width="0.8" stroke-linejoin="round"/><rect x="4" y="1.3" width="5.2" height="6" fill="#5e4c08" stroke="#1a1a1a" stroke-width="0.6"/><ellipse cx="6.6" cy="2" rx="2.4" ry="1.1" fill="#f5d400"/><ellipse cx="8.6" cy="8.2" rx="3.4" ry="1.9" fill="#e9c400" stroke="#1a1a1a" stroke-width="0.7"/><path d="M6 8.2H11" stroke="#f5d400" stroke-width="0.8"/></svg>
<div class="t" style="left:166.5px;top:396.00px;font-size:12px;line-height:12px;font-weight:400;color:#000;">Solarkollektoranlage</div>
<div class="a" style="left:135px;top:419px;width:8px;height:1px;background:repeating-linear-gradient(to right,#a0a0a0 0,#a0a0a0 1px,transparent 1px,transparent 2px)"></div>
<svg style="left:143px;top:414px" width="17" height="12" viewBox="0 0 17 12"><path d="M1.5 8L9 3.5L16 4L11 8.5Z" fill="#4f9a14" stroke="#1a1a1a" stroke-width="0.8" stroke-linejoin="round"/><rect x="4" y="1.3" width="5.2" height="6" fill="#5e4c08" stroke="#1a1a1a" stroke-width="0.6"/><ellipse cx="6.6" cy="2" rx="2.4" ry="1.1" fill="#f5d400"/><ellipse cx="8.6" cy="8.2" rx="3.4" ry="1.9" fill="#e9c400" stroke="#1a1a1a" stroke-width="0.7"/><path d="M6 8.2H11" stroke="#f5d400" stroke-width="0.8"/></svg>
<div class="t" style="left:166.5px;top:414.00px;font-size:12px;line-height:12px;font-weight:400;color:#000;">Biomasseheizung</div>
<div class="a" style="left:135px;top:437px;width:8px;height:1px;background:repeating-linear-gradient(to right,#a0a0a0 0,#a0a0a0 1px,transparent 1px,transparent 2px)"></div>
<svg style="left:143px;top:432px" width="17" height="12" viewBox="0 0 17 12"><path d="M1.5 8L9 3.5L16 4L11 8.5Z" fill="#4f9a14" stroke="#1a1a1a" stroke-width="0.8" stroke-linejoin="round"/><rect x="4" y="1.3" width="5.2" height="6" fill="#5e4c08" stroke="#1a1a1a" stroke-width="0.6"/><ellipse cx="6.6" cy="2" rx="2.4" ry="1.1" fill="#f5d400"/><ellipse cx="8.6" cy="8.2" rx="3.4" ry="1.9" fill="#e9c400" stroke="#1a1a1a" stroke-width="0.7"/><path d="M6 8.2H11" stroke="#f5d400" stroke-width="0.8"/></svg>
<div class="t" style="left:166.5px;top:432.00px;font-size:12px;line-height:12px;font-weight:400;color:#000;">Wärmepumpenanlage</div>
<div class="a" style="left:135px;top:455px;width:8px;height:1px;background:repeating-linear-gradient(to right,#a0a0a0 0,#a0a0a0 1px,transparent 1px,transparent 2px)"></div>
<svg style="left:143px;top:450px" width="17" height="12" viewBox="0 0 17 12"><path d="M1.5 8L9 3.5L16 4L11 8.5Z" fill="#4f9a14" stroke="#1a1a1a" stroke-width="0.8" stroke-linejoin="round"/><rect x="4" y="1.3" width="5.2" height="6" fill="#5e4c08" stroke="#1a1a1a" stroke-width="0.6"/><ellipse cx="6.6" cy="2" rx="2.4" ry="1.1" fill="#f5d400"/><ellipse cx="8.6" cy="8.2" rx="3.4" ry="1.9" fill="#e9c400" stroke="#1a1a1a" stroke-width="0.7"/><path d="M6 8.2H11" stroke="#f5d400" stroke-width="0.8"/></svg>
<div class="t" style="left:166.5px;top:450.00px;font-size:12px;line-height:12px;font-weight:400;color:#000;">Brennstoffzellenheizung</div>
<div class="a" style="left:135px;top:473px;width:8px;height:1px;background:repeating-linear-gradient(to right,#a0a0a0 0,#a0a0a0 1px,transparent 1px,transparent 2px)"></div>
<svg style="left:143px;top:468px" width="17" height="12" viewBox="0 0 17 12"><path d="M1.5 8L9 3.5L16 4L11 8.5Z" fill="#4f9a14" stroke="#1a1a1a" stroke-width="0.8" stroke-linejoin="round"/><rect x="4" y="1.3" width="5.2" height="6" fill="#5e4c08" stroke="#1a1a1a" stroke-width="0.6"/><ellipse cx="6.6" cy="2" rx="2.4" ry="1.1" fill="#f5d400"/><ellipse cx="8.6" cy="8.2" rx="3.4" ry="1.9" fill="#e9c400" stroke="#1a1a1a" stroke-width="0.7"/><path d="M6 8.2H11" stroke="#f5d400" stroke-width="0.8"/></svg>
<div class="t" style="left:166.5px;top:468.00px;font-size:12px;line-height:12px;font-weight:400;color:#000;">Gebäude-/Wärmenetz</div>
<div class="a" style="left:135px;top:491px;width:8px;height:1px;background:repeating-linear-gradient(to right,#a0a0a0 0,#a0a0a0 1px,transparent 1px,transparent 2px)"></div>
<svg style="left:143px;top:486px" width="17" height="12" viewBox="0 0 17 12"><path d="M1.5 8L9 3.5L16 4L11 8.5Z" fill="#4f9a14" stroke="#1a1a1a" stroke-width="0.8" stroke-linejoin="round"/><rect x="4" y="1.3" width="5.2" height="6" fill="#5e4c08" stroke="#1a1a1a" stroke-width="0.6"/><ellipse cx="6.6" cy="2" rx="2.4" ry="1.1" fill="#f5d400"/><ellipse cx="8.6" cy="8.2" rx="3.4" ry="1.9" fill="#e9c400" stroke="#1a1a1a" stroke-width="0.7"/><path d="M6 8.2H11" stroke="#f5d400" stroke-width="0.8"/></svg>
<div class="t" style="left:166.5px;top:486.00px;font-size:12px;line-height:12px;font-weight:400;color:#000;">Heizungsoptimierung</div>
<div class="a" style="left:135px;top:509px;width:8px;height:1px;background:repeating-linear-gradient(to right,#a0a0a0 0,#a0a0a0 1px,transparent 1px,transparent 2px)"></div>
<svg style="left:143px;top:504px" width="17" height="12" viewBox="0 0 17 12"><path d="M1.5 8L9 3.5L16 4L11 8.5Z" fill="#4f9a14" stroke="#1a1a1a" stroke-width="0.8" stroke-linejoin="round"/><rect x="4" y="1.3" width="5.2" height="6" fill="#5e4c08" stroke="#1a1a1a" stroke-width="0.6"/><ellipse cx="6.6" cy="2" rx="2.4" ry="1.1" fill="#f5d400"/><ellipse cx="8.6" cy="8.2" rx="3.4" ry="1.9" fill="#e9c400" stroke="#1a1a1a" stroke-width="0.7"/><path d="M6 8.2H11" stroke="#f5d400" stroke-width="0.8"/></svg>
<div class="t" style="left:166.5px;top:504.00px;font-size:12px;line-height:12px;font-weight:400;color:#000;">Emissionsminderung</div>
<div class="a" style="left:135px;top:527px;width:8px;height:1px;background:repeating-linear-gradient(to right,#a0a0a0 0,#a0a0a0 1px,transparent 1px,transparent 2px)"></div>
<svg style="left:143px;top:522px" width="17" height="12" viewBox="0 0 17 12"><path d="M1.5 8L9 3.5L16 4L11 8.5Z" fill="#4f9a14" stroke="#1a1a1a" stroke-width="0.8" stroke-linejoin="round"/><rect x="4" y="1.3" width="5.2" height="6" fill="#5e4c08" stroke="#1a1a1a" stroke-width="0.6"/><ellipse cx="6.6" cy="2" rx="2.4" ry="1.1" fill="#f5d400"/><ellipse cx="8.6" cy="8.2" rx="3.4" ry="1.9" fill="#e9c400" stroke="#1a1a1a" stroke-width="0.7"/><path d="M6 8.2H11" stroke="#f5d400" stroke-width="0.8"/></svg>
<div class="t" style="left:166.5px;top:522.00px;font-size:12px;line-height:12px;font-weight:400;color:#000;">Baubegleitung</div>
<div class="a" style="left:135px;top:545px;width:8px;height:1px;background:repeating-linear-gradient(to right,#a0a0a0 0,#a0a0a0 1px,transparent 1px,transparent 2px)"></div>
<svg style="left:143px;top:540px" width="17" height="12" viewBox="0 0 17 12"><path d="M1.5 8L9 3.5L16 4L11 8.5Z" fill="#4f9a14" stroke="#1a1a1a" stroke-width="0.8" stroke-linejoin="round"/><rect x="4" y="1.3" width="5.2" height="6" fill="#5e4c08" stroke="#1a1a1a" stroke-width="0.6"/><ellipse cx="6.6" cy="2" rx="2.4" ry="1.1" fill="#f5d400"/><ellipse cx="8.6" cy="8.2" rx="3.4" ry="1.9" fill="#e9c400" stroke="#1a1a1a" stroke-width="0.7"/><path d="M6 8.2H11" stroke="#f5d400" stroke-width="0.8"/></svg>
<div class="t" style="left:166.5px;top:540.00px;font-size:12px;line-height:12px;font-weight:400;color:#000;">Ergänzungskredit</div>
<div class="a" style="left:116px;top:563px;width:8px;height:1px;background:repeating-linear-gradient(to right,#a0a0a0 0,#a0a0a0 1px,transparent 1px,transparent 2px)"></div>
<svg style="left:124px;top:558px" width="17" height="12" viewBox="0 0 17 12"><path d="M1.5 8L9 3.5L16 4L11 8.5Z" fill="#4f9a14" stroke="#1a1a1a" stroke-width="0.8" stroke-linejoin="round"/><rect x="4" y="1.3" width="5.2" height="6" fill="#5e4c08" stroke="#1a1a1a" stroke-width="0.6"/><ellipse cx="6.6" cy="2" rx="2.4" ry="1.1" fill="#f5d400"/><ellipse cx="8.6" cy="8.2" rx="3.4" ry="1.9" fill="#e9c400" stroke="#1a1a1a" stroke-width="0.7"/><path d="M6 8.2H11" stroke="#f5d400" stroke-width="0.8"/></svg>
<div class="t" style="left:147.5px;top:558.00px;font-size:12px;line-height:12px;font-weight:400;color:#000;">Steuerbonus, weitere Förderungen</div>
<div class="a" style="left:102px;top:581px;width:3px;height:1px;background:repeating-linear-gradient(to right,#a0a0a0 0,#a0a0a0 1px,transparent 1px,transparent 2px)"></div>
<div class="a" style="left:93px;top:577px;width:9px;height:9px;border:1px solid #a0a0a0;border-radius:1px;background:linear-gradient(#fff,#e4e4e4)"></div><div class="a" style="left:95px;top:581px;width:5px;height:1px;background:#2e4b9a"></div><div class="a" style="left:97px;top:579px;width:1px;height:5px;background:#2e4b9a"></div>
<svg style="left:106px;top:574px" width="16" height="16" viewBox="0 0 16 16"><rect width="16" height="16" fill="#6aa82a"/><path d="M4 8L8 4L12 8V12H4Z" fill="none" stroke="#d8ecc0" stroke-width="0.9"/><path d="M2 12Q6 15 14 11" fill="none" stroke="#d8ecc0" stroke-width="0.9"/></svg>
<div class="t" style="left:128.5px;top:576.00px;font-size:12px;line-height:12px;font-weight:400;color:#000;">Nachhaltigkeit</div>
<div class="a" style="left:64px;top:599px;width:3px;height:1px;background:repeating-linear-gradient(to right,#a0a0a0 0,#a0a0a0 1px,transparent 1px,transparent 2px)"></div>
<div class="a" style="left:55px;top:595px;width:9px;height:9px;border:1px solid #a0a0a0;border-radius:1px;background:linear-gradient(#fff,#e4e4e4)"></div><div class="a" style="left:57px;top:599px;width:5px;height:1px;background:#2e4b9a"></div><div class="a" style="left:59px;top:597px;width:1px;height:5px;background:#2e4b9a"></div>
<svg style="left:68px;top:592px" width="16" height="16" viewBox="0 0 16 16"><path d="M1 6H12V15H1Z" fill="#c8262b" stroke="#000" stroke-width="1"/><path d="M1 6L4 3.5H15L12 6Z M12 6L15 3.5V12.5L12 15Z" fill="#c8262b" stroke="#000" stroke-width="1"/><path d="M6.5 6V15M4.5 3.5L10 6" stroke="#000" stroke-width="1.1"/><path d="M4 2L6 3.5L8 1" fill="none" stroke="#000" stroke-width="0.9"/></svg>
<div class="t" style="left:90.5px;top:594.00px;font-size:12px;line-height:12px;font-weight:400;color:#000;">Dachausbau (2)</div>
<div class="a" style="left:64px;top:617px;width:3px;height:1px;background:repeating-linear-gradient(to right,#a0a0a0 0,#a0a0a0 1px,transparent 1px,transparent 2px)"></div>
<div class="a" style="left:55px;top:613px;width:9px;height:9px;border:1px solid #a0a0a0;border-radius:1px;background:linear-gradient(#fff,#e4e4e4)"></div><div class="a" style="left:57px;top:617px;width:5px;height:1px;background:#2e4b9a"></div><div class="a" style="left:59px;top:615px;width:1px;height:5px;background:#2e4b9a"></div>
<svg style="left:68px;top:610px" width="16" height="16" viewBox="0 0 16 16"><path d="M1 6H12V15H1Z" fill="#a6ce39" stroke="#000" stroke-width="1"/><path d="M1 6L4 3.5H15L12 6Z M12 6L15 3.5V12.5L12 15Z" fill="#a6ce39" stroke="#000" stroke-width="1"/><path d="M6.5 6V15M4.5 3.5L10 6" stroke="#000" stroke-width="1.1"/><path d="M4 2L6 3.5L8 1" fill="none" stroke="#000" stroke-width="0.9"/></svg>
<div class="t" style="left:90.5px;top:612.00px;font-size:12px;line-height:12px;font-weight:400;color:#000;">Heizung und Solaranlage (3)</div>
<div class="a" style="left:45px;top:635px;width:3px;height:1px;background:repeating-linear-gradient(to right,#a0a0a0 0,#a0a0a0 1px,transparent 1px,transparent 2px)"></div>
<div class="a" style="left:36px;top:631px;width:9px;height:9px;border:1px solid #a0a0a0;border-radius:1px;background:linear-gradient(#fff,#e4e4e4)"></div><div class="a" style="left:38px;top:635px;width:5px;height:1px;background:#2e4b9a"></div><div class="a" style="left:40px;top:633px;width:1px;height:5px;background:#2e4b9a"></div>
<svg style="left:49px;top:630px" width="16" height="14" viewBox="0 0 16 14"><rect x="0.75" y="0.75" width="14.5" height="11.5" fill="#fff" stroke="#000" stroke-width="1.5"/><rect x="1.5" y="1.5" width="13" height="1.8" fill="#1a3f8f"/><rect x="3" y="4" width="2" height="1.2" fill="#000"/><rect x="6" y="4" width="2" height="1.2" fill="#000"/><rect x="9" y="4" width="2" height="1.2" fill="#000"/><rect x="12" y="4" width="2" height="1.2" fill="#000"/><rect x="3" y="6" width="2" height="1.2" fill="#000"/><rect x="6" y="6" width="2" height="1.2" fill="#000"/><rect x="9" y="6" width="2" height="1.2" fill="#000"/><rect x="12" y="6" width="2" height="1.2" fill="#000"/><rect x="3" y="8" width="2" height="1.2" fill="#000"/><rect x="6" y="8" width="2" height="1.2" fill="#000"/><rect x="9" y="8" width="2" height="1.2" fill="#000"/><rect x="12" y="8" width="2" height="1.2" fill="#000"/><rect x="3" y="10" width="2" height="1.2" fill="#000"/><rect x="6" y="10" width="2" height="1.2" fill="#000"/><rect x="9" y="10" width="2" height="1.2" fill="#000"/><rect x="12" y="10" width="2" height="1.2" fill="#000"/></svg>
<div class="t" style="left:71.5px;top:630.00px;font-size:12px;line-height:12px;font-weight:400;color:#000;">weitere Varianten</div>
<div class="a" style="left:26px;top:653px;width:3px;height:1px;background:repeating-linear-gradient(to right,#a0a0a0 0,#a0a0a0 1px,transparent 1px,transparent 2px)"></div>
<div class="a" style="left:17px;top:649px;width:9px;height:9px;border:1px solid #a0a0a0;border-radius:1px;background:linear-gradient(#fff,#e4e4e4)"></div><div class="a" style="left:19px;top:653px;width:5px;height:1px;background:#2e4b9a"></div><div class="a" style="left:21px;top:651px;width:1px;height:5px;background:#2e4b9a"></div>
<svg style="left:30px;top:646px" width="16" height="16" viewBox="0 0 16 16"><path d="M4 2L1 5V11L3 14" fill="none" stroke="#c8262b" stroke-width="1.5"/><path d="M7 2L4 5V12L6 15" fill="none" stroke="#f1c43a" stroke-width="1.5"/><path d="M15.5 8.5L10 3L5.5 7.5V15H16" fill="none" stroke="#3a9a1a" stroke-width="1.5"/></svg>
<div class="t" style="left:52.5px;top:648.00px;font-size:12px;line-height:12px;font-weight:400;color:#000;">Mein Sanierungsfahrplan</div>
<div style="position:absolute;left:0;top:0;z-index:20"><svg style="left:336px;top:386px" width="19" height="17" viewBox="0 0 19 17"><g stroke="#fff" stroke-width="2.2" fill="#fff" stroke-linejoin="round"><path d="M1 8.4L4.5 5V11.8Z M15 8.4L18 8.4 M4 8.4H7 M12 8.4H15 M14.5 5L18 8.4L14.5 11.8Z M8.5 1.2V15.7 M10.5 1.2V15.7"/></g><path d="M1 8.4L4.5 5V11.8Z M14.5 5L18 8.4L14.5 11.8Z" fill="#000"/><path d="M4 8.4H7M12 8.4H15M8.5 1.2V15.7M10.5 1.2V15.7" stroke="#000" stroke-width="1.1"/></svg></div>
<div class="t" style="left:633.5px;top:97.00px;font-size:12px;line-height:12px;font-weight:700;color:#fff;letter-spacing:-0.15px">Bundesförderung Effiziente Gebäude - Einzelmaßnahmen - Förderübersicht Pro</div>
<div class="a" style="left:348px;top:121px;width:1014px;height:814px;background:#fff;border:3px solid #b4b4b4;border-right-width:3px"></div>
<div class="a" style="left:351px;top:124px;width:1008px;height:38px;background:#f2f2f2"></div>
<div class="t" style="left:359.5px;top:137.00px;font-size:12px;line-height:12px;font-weight:700;color:#000;">Förderprogramme</div>
<div class="t" style="left:357.5px;top:173.00px;font-size:12px;line-height:12px;font-weight:400;color:#000;letter-spacing:-0.13px">BEG-Förderbestimmungen ab 01/2024 für Einzelmaßnahmen</div>
<div class="a" style="left:684px;top:169px;width:20px;height:19px;border:1px solid #c8c8c8;border-radius:3px;background:#fff"></div>
<svg style="left:686px;top:172px" width="16" height="13" viewBox="0 0 16 13"><path d="M1.5 11Q1 3 8 3Q11 3 12.5 6" fill="none" stroke="#3b7fc0" stroke-width="3"/><path d="M15 3.5V11H8Z" fill="#3b7fc0"/></svg>
<div class="t" style="left:357.5px;top:203.00px;font-size:12px;line-height:12px;font-weight:700;color:#000;">Förderprogramm</div>
<div class="t" style="left:596.5px;top:203.00px;font-size:12px;line-height:12px;font-weight:700;color:#a0a0a0;">Kredit</div>
<div class="t" style="left:644px;top:203.00px;font-size:12px;line-height:12px;font-weight:700;color:#000;">Zuschuss</div>
<div class="t" style="left:706.5px;top:203.00px;font-size:12px;line-height:12px;font-weight:700;color:#000;letter-spacing:-0.1px">BEG-relevante Kosten</div>
<div class="t" style="left:857.5px;top:203.00px;font-size:12px;line-height:12px;font-weight:700;color:#000;">förderfähige Kosten</div>
<div class="t" style="left:1002px;top:203.00px;font-size:12px;line-height:12px;font-weight:700;color:#000;letter-spacing:0.1px">geldwerter Vorteil</div>
<div class="a" style="left:357px;top:232px;width:13px;height:13px;background:#005fc4;border-radius:3px"></div>
<svg style="left:357px;top:232px" width="13" height="13" viewBox="0 0 13 13"><path d="M3.3 6.8L5.5 9L10 4.3" fill="none" stroke="#fff" stroke-width="1.1"/></svg>
<div class="a" style="left:370px;top:231px;width:14px;height:14px;background:#a5cf2c"></div><svg style="left:370px;top:231px" width="14" height="14" viewBox="0 0 14 14"><path d="M1.7 13.0 L7.0 2.4 L12.3 13.0 M3.7 9.9 H10.3" fill="none" stroke="#fff" stroke-width="1.4"/></svg>
<div class="t" style="left:391.5px;top:233.00px;font-size:12px;line-height:12px;font-weight:400;color:#000;">Einzelmaßnahmen Gebäudehülle</div>
<div class="a" style="left:618.0px;top:229.0px;width:13px;height:13px;border-radius:50%;background:#f8f8f8;border:1px solid #b8b8b8"></div>
<div class="a" style="left:678.0px;top:229.0px;width:13px;height:13px;border-radius:50%;background:#005fc4;"></div><div class="a" style="left:682.0px;top:233.0px;width:5px;height:5px;border-radius:50%;background:#fff"></div>
<div class="a" style="left:753px;top:225px;width:75px;height:22px;background:#f0f0f0;border:1px solid #e3e3e3;border-bottom:1px solid #8a8a8a;border-radius:2px"></div><div class="t" style="right:780px;top:229.00px;font-size:12px;line-height:12px;font-weight:400;color:#6d6d6d;text-align:right;">155.824</div><div class="a" style="left:810px;top:226px;width:17px;height:19px;background:#a5cf2c;border:1px solid #a9d4f5"></div><svg style="left:810px;top:226px" width="17" height="19" viewBox="0 0 17 19"><path d="M3.2 15.5 L8.5 4.9 L13.8 15.5 M5.2 12.4 H11.8" fill="none" stroke="#fff" stroke-width="1.4"/></svg>
<div class="t" style="left:832px;top:230.00px;font-size:12px;line-height:12px;font-weight:400;color:#000;">€</div>
<div class="a" style="left:886px;top:225px;width:76px;height:22px;background:#f0f0f0;border:1px solid #e3e3e3;border-bottom:1px solid #8a8a8a;border-radius:2px"></div><div class="t" style="right:630px;top:229.00px;font-size:12px;line-height:12px;font-weight:400;color:#000;text-align:right;">155.824</div>
<div class="t" style="left:966px;top:230.00px;font-size:12px;line-height:12px;font-weight:400;color:#000;">€</div>
<div class="a" style="left:1021px;top:225px;width:75px;height:22px;background:#f0f0f0;border:1px solid #e3e3e3;border-bottom:1px solid #8a8a8a;border-radius:2px"></div><div class="t" style="right:496px;top:229.00px;font-size:12px;line-height:12px;font-weight:400;color:#000;text-align:right;">31.165</div>
<div class="t" style="left:1100px;top:230.00px;font-size:12px;line-height:12px;font-weight:400;color:#000;">€</div>
<div class="a" style="left:357px;top:267px;width:13px;height:13px;background:#005fc4;border-radius:3px"></div>
<svg style="left:357px;top:267px" width="13" height="13" viewBox="0 0 13 13"><path d="M3.3 6.8L5.5 9L10 4.3" fill="none" stroke="#fff" stroke-width="1.1"/></svg>
<div class="a" style="left:370px;top:266px;width:14px;height:14px;background:#a5cf2c"></div><svg style="left:370px;top:266px" width="14" height="14" viewBox="0 0 14 14"><path d="M1.7 13.0 L7.0 2.4 L12.3 13.0 M3.7 9.9 H10.3" fill="none" stroke="#fff" stroke-width="1.4"/></svg>
<div class="t" style="left:391.5px;top:268.00px;font-size:12px;line-height:12px;font-weight:400;color:#000;">Anlagentechnik</div>
<div class="a" style="left:618.0px;top:264.0px;width:13px;height:13px;border-radius:50%;background:#f8f8f8;border:1px solid #b8b8b8"></div>
<div class="a" style="left:678.0px;top:264.0px;width:13px;height:13px;border-radius:50%;background:#005fc4;"></div><div class="a" style="left:682.0px;top:268.0px;width:5px;height:5px;border-radius:50%;background:#fff"></div>
<div class="a" style="left:753px;top:260px;width:75px;height:22px;background:#f0f0f0;border:1px solid #e3e3e3;border-bottom:1px solid #8a8a8a;border-radius:2px"></div><div class="t" style="right:780px;top:264.00px;font-size:12px;line-height:12px;font-weight:400;color:#6d6d6d;text-align:right;">15.000</div><div class="a" style="left:810px;top:261px;width:17px;height:19px;background:#a5cf2c;border:1px solid #a9d4f5"></div><svg style="left:810px;top:261px" width="17" height="19" viewBox="0 0 17 19"><path d="M3.2 15.5 L8.5 4.9 L13.8 15.5 M5.2 12.4 H11.8" fill="none" stroke="#fff" stroke-width="1.4"/></svg>
<div class="t" style="left:832px;top:265.00px;font-size:12px;line-height:12px;font-weight:400;color:#000;">€</div>
<div class="a" style="left:886px;top:260px;width:76px;height:22px;background:#f0f0f0;border:1px solid #e3e3e3;border-bottom:1px solid #8a8a8a;border-radius:2px"></div><div class="t" style="right:630px;top:264.00px;font-size:12px;line-height:12px;font-weight:400;color:#000;text-align:right;">15.000</div>
<div class="t" style="left:966px;top:265.00px;font-size:12px;line-height:12px;font-weight:400;color:#000;">€</div>
<div class="a" style="left:1021px;top:260px;width:75px;height:22px;background:#f0f0f0;border:1px solid #e3e3e3;border-bottom:1px solid #8a8a8a;border-radius:2px"></div><div class="t" style="right:496px;top:264.00px;font-size:12px;line-height:12px;font-weight:400;color:#000;text-align:right;">3.000</div>
<div class="t" style="left:1100px;top:265.00px;font-size:12px;line-height:12px;font-weight:400;color:#000;">€</div>
<div class="a" style="left:357px;top:302px;width:13px;height:13px;background:#fff;border:1px solid #8a8a8a;border-radius:3px"></div>
<div class="a" style="left:370px;top:301px;width:14px;height:14px;background:#a5cf2c"></div><svg style="left:370px;top:301px" width="14" height="14" viewBox="0 0 14 14"><path d="M1.7 13.0 L7.0 2.4 L12.3 13.0 M3.7 9.9 H10.3" fill="none" stroke="#fff" stroke-width="1.4"/></svg>
<div class="t" style="left:391.5px;top:303.00px;font-size:12px;line-height:12px;font-weight:400;color:#000;">Solarkollektoranlage</div>
<div class="a" style="left:618.0px;top:299.0px;width:13px;height:13px;border-radius:50%;background:#f8f8f8;border:1px solid #b8b8b8"></div>
<div class="a" style="left:678.0px;top:299.0px;width:13px;height:13px;border-radius:50%;background:#005fc4;"></div><div class="a" style="left:682.0px;top:303.0px;width:5px;height:5px;border-radius:50%;background:#fff"></div>
<div class="a" style="left:753px;top:295px;width:75px;height:22px;background:#f0f0f0;border:1px solid #e3e3e3;border-bottom:1px solid #8a8a8a;border-radius:2px"></div><div class="t" style="right:780px;top:299.00px;font-size:12px;line-height:12px;font-weight:400;color:#6d6d6d;text-align:right;">0</div><div class="a" style="left:810px;top:296px;width:17px;height:19px;background:#a5cf2c;border:1px solid #a9d4f5"></div><svg style="left:810px;top:296px" width="17" height="19" viewBox="0 0 17 19"><path d="M3.2 15.5 L8.5 4.9 L13.8 15.5 M5.2 12.4 H11.8" fill="none" stroke="#fff" stroke-width="1.4"/></svg>
<div class="t" style="left:832px;top:300.00px;font-size:12px;line-height:12px;font-weight:400;color:#000;">€</div>
<div class="a" style="left:886px;top:295px;width:76px;height:22px;background:#f0f0f0;border:1px solid #e3e3e3;border-bottom:1px solid #8a8a8a;border-radius:2px"></div><div class="t" style="right:630px;top:299.00px;font-size:12px;line-height:12px;font-weight:400;color:#000;text-align:right;">0</div>
<div class="t" style="left:966px;top:300.00px;font-size:12px;line-height:12px;font-weight:400;color:#000;">€</div>
<div class="a" style="left:1021px;top:295px;width:75px;height:22px;background:#f0f0f0;border:1px solid #e3e3e3;border-bottom:1px solid #8a8a8a;border-radius:2px"></div><div class="t" style="right:496px;top:299.00px;font-size:12px;line-height:12px;font-weight:400;color:#000;text-align:right;">0</div>
<div class="t" style="left:1100px;top:300.00px;font-size:12px;line-height:12px;font-weight:400;color:#000;">€</div>
<div class="a" style="left:357px;top:337px;width:13px;height:13px;background:#fff;border:1px solid #8a8a8a;border-radius:3px"></div>
<div class="a" style="left:370px;top:336px;width:14px;height:14px;background:#a5cf2c"></div><svg style="left:370px;top:336px" width="14" height="14" viewBox="0 0 14 14"><path d="M1.7 13.0 L7.0 2.4 L12.3 13.0 M3.7 9.9 H10.3" fill="none" stroke="#fff" stroke-width="1.4"/></svg>
<div class="t" style="left:391.5px;top:338.00px;font-size:12px;line-height:12px;font-weight:400;color:#000;">Biomasseheizung</div>
<div class="a" style="left:618.0px;top:334.0px;width:13px;height:13px;border-radius:50%;background:#f8f8f8;border:1px solid #b8b8b8"></div>
<div class="a" style="left:678.0px;top:334.0px;width:13px;height:13px;border-radius:50%;background:#005fc4;"></div><div class="a" style="left:682.0px;top:338.0px;width:5px;height:5px;border-radius:50%;background:#fff"></div>
<div class="a" style="left:753px;top:330px;width:75px;height:22px;background:#f0f0f0;border:1px solid #e3e3e3;border-bottom:1px solid #8a8a8a;border-radius:2px"></div><div class="t" style="right:780px;top:334.00px;font-size:12px;line-height:12px;font-weight:400;color:#6d6d6d;text-align:right;">0</div><div class="a" style="left:810px;top:331px;width:17px;height:19px;background:#a5cf2c;border:1px solid #a9d4f5"></div><svg style="left:810px;top:331px" width="17" height="19" viewBox="0 0 17 19"><path d="M3.2 15.5 L8.5 4.9 L13.8 15.5 M5.2 12.4 H11.8" fill="none" stroke="#fff" stroke-width="1.4"/></svg>
<div class="t" style="left:832px;top:335.00px;font-size:12px;line-height:12px;font-weight:400;color:#000;">€</div>
<div class="a" style="left:886px;top:330px;width:76px;height:22px;background:#f0f0f0;border:1px solid #e3e3e3;border-bottom:1px solid #8a8a8a;border-radius:2px"></div><div class="t" style="right:630px;top:334.00px;font-size:12px;line-height:12px;font-weight:400;color:#000;text-align:right;">0</div>
<div class="t" style="left:966px;top:335.00px;font-size:12px;line-height:12px;font-weight:400;color:#000;">€</div>
<div class="a" style="left:1021px;top:330px;width:75px;height:22px;background:#f0f0f0;border:1px solid #e3e3e3;border-bottom:1px solid #8a8a8a;border-radius:2px"></div><div class="t" style="right:496px;top:334.00px;font-size:12px;line-height:12px;font-weight:400;color:#000;text-align:right;">0</div>
<div class="t" style="left:1100px;top:335.00px;font-size:12px;line-height:12px;font-weight:400;color:#000;">€</div>
<div class="a" style="left:357px;top:372px;width:13px;height:13px;background:#fff;border:1px solid #8a8a8a;border-radius:3px"></div>
<div class="a" style="left:370px;top:371px;width:14px;height:14px;background:#a5cf2c"></div><svg style="left:370px;top:371px" width="14" height="14" viewBox="0 0 14 14"><path d="M1.7 13.0 L7.0 2.4 L12.3 13.0 M3.7 9.9 H10.3" fill="none" stroke="#fff" stroke-width="1.4"/></svg>
<div class="t" style="left:391.5px;top:373.00px;font-size:12px;line-height:12px;font-weight:400;color:#000;">Wärmepumpenanlage</div>
<div class="a" style="left:618.0px;top:369.0px;width:13px;height:13px;border-radius:50%;background:#f8f8f8;border:1px solid #b8b8b8"></div>
<div class="a" style="left:678.0px;top:369.0px;width:13px;height:13px;border-radius:50%;background:#005fc4;"></div><div class="a" style="left:682.0px;top:373.0px;width:5px;height:5px;border-radius:50%;background:#fff"></div>
<div class="a" style="left:753px;top:365px;width:75px;height:22px;background:#f0f0f0;border:1px solid #e3e3e3;border-bottom:1px solid #8a8a8a;border-radius:2px"></div><div class="t" style="right:780px;top:369.00px;font-size:12px;line-height:12px;font-weight:400;color:#6d6d6d;text-align:right;">0</div><div class="a" style="left:810px;top:366px;width:17px;height:19px;background:#a5cf2c;border:1px solid #a9d4f5"></div><svg style="left:810px;top:366px" width="17" height="19" viewBox="0 0 17 19"><path d="M3.2 15.5 L8.5 4.9 L13.8 15.5 M5.2 12.4 H11.8" fill="none" stroke="#fff" stroke-width="1.4"/></svg>
<div class="t" style="left:832px;top:370.00px;font-size:12px;line-height:12px;font-weight:400;color:#000;">€</div>
<div class="a" style="left:886px;top:365px;width:76px;height:22px;background:#f0f0f0;border:1px solid #e3e3e3;border-bottom:1px solid #8a8a8a;border-radius:2px"></div><div class="t" style="right:630px;top:369.00px;font-size:12px;line-height:12px;font-weight:400;color:#000;text-align:right;">0</div>
<div class="t" style="left:966px;top:370.00px;font-size:12px;line-height:12px;font-weight:400;color:#000;">€</div>
<div class="a" style="left:1021px;top:365px;width:75px;height:22px;background:#f0f0f0;border:1px solid #e3e3e3;border-bottom:1px solid #8a8a8a;border-radius:2px"></div><div class="t" style="right:496px;top:369.00px;font-size:12px;line-height:12px;font-weight:400;color:#000;text-align:right;">0</div>
<div class="t" style="left:1100px;top:370.00px;font-size:12px;line-height:12px;font-weight:400;color:#000;">€</div>
<div class="a" style="left:357px;top:407px;width:13px;height:13px;background:#fff;border:1px solid #8a8a8a;border-radius:3px"></div>
<div class="a" style="left:370px;top:406px;width:14px;height:14px;background:#a5cf2c"></div><svg style="left:370px;top:406px" width="14" height="14" viewBox="0 0 14 14"><path d="M1.7 13.0 L7.0 2.4 L12.3 13.0 M3.7 9.9 H10.3" fill="none" stroke="#fff" stroke-width="1.4"/></svg>
<div class="t" style="left:391.5px;top:408.00px;font-size:12px;line-height:12px;font-weight:400;color:#000;">Brennstoffzellenheizung</div>
<div class="a" style="left:618.0px;top:404.0px;width:13px;height:13px;border-radius:50%;background:#f8f8f8;border:1px solid #b8b8b8"></div>
<div class="a" style="left:678.0px;top:404.0px;width:13px;height:13px;border-radius:50%;background:#005fc4;"></div><div class="a" style="left:682.0px;top:408.0px;width:5px;height:5px;border-radius:50%;background:#fff"></div>
<div class="a" style="left:753px;top:400px;width:75px;height:22px;background:#f0f0f0;border:1px solid #e3e3e3;border-bottom:1px solid #8a8a8a;border-radius:2px"></div><div class="t" style="right:780px;top:404.00px;font-size:12px;line-height:12px;font-weight:400;color:#6d6d6d;text-align:right;">0</div><div class="a" style="left:810px;top:401px;width:17px;height:19px;background:#a5cf2c;border:1px solid #a9d4f5"></div><svg style="left:810px;top:401px" width="17" height="19" viewBox="0 0 17 19"><path d="M3.2 15.5 L8.5 4.9 L13.8 15.5 M5.2 12.4 H11.8" fill="none" stroke="#fff" stroke-width="1.4"/></svg>
<div class="t" style="left:832px;top:405.00px;font-size:12px;line-height:12px;font-weight:400;color:#000;">€</div>
<div class="a" style="left:886px;top:400px;width:76px;height:22px;background:#f0f0f0;border:1px solid #e3e3e3;border-bottom:1px solid #8a8a8a;border-radius:2px"></div><div class="t" style="right:630px;top:404.00px;font-size:12px;line-height:12px;font-weight:400;color:#000;text-align:right;">0</div>
<div class="t" style="left:966px;top:405.00px;font-size:12px;line-height:12px;font-weight:400;color:#000;">€</div>
<div class="a" style="left:1021px;top:400px;width:75px;height:22px;background:#f0f0f0;border:1px solid #e3e3e3;border-bottom:1px solid #8a8a8a;border-radius:2px"></div><div class="t" style="right:496px;top:404.00px;font-size:12px;line-height:12px;font-weight:400;color:#000;text-align:right;">0</div>
<div class="t" style="left:1100px;top:405.00px;font-size:12px;line-height:12px;font-weight:400;color:#000;">€</div>
<div class="a" style="left:357px;top:442px;width:13px;height:13px;background:#fff;border:1px solid #8a8a8a;border-radius:3px"></div>
<div class="a" style="left:370px;top:441px;width:14px;height:14px;background:#a5cf2c"></div><svg style="left:370px;top:441px" width="14" height="14" viewBox="0 0 14 14"><path d="M1.7 13.0 L7.0 2.4 L12.3 13.0 M3.7 9.9 H10.3" fill="none" stroke="#fff" stroke-width="1.4"/></svg>
<div class="t" style="left:391.5px;top:443.00px;font-size:12px;line-height:12px;font-weight:400;color:#000;">Gebäude-/Wärmenetz</div>
<div class="a" style="left:618.0px;top:439.0px;width:13px;height:13px;border-radius:50%;background:#f8f8f8;border:1px solid #b8b8b8"></div>
<div class="a" style="left:678.0px;top:439.0px;width:13px;height:13px;border-radius:50%;background:#005fc4;"></div><div class="a" style="left:682.0px;top:443.0px;width:5px;height:5px;border-radius:50%;background:#fff"></div>
<div class="a" style="left:753px;top:435px;width:75px;height:22px;background:#f0f0f0;border:1px solid #e3e3e3;border-bottom:1px solid #8a8a8a;border-radius:2px"></div><div class="t" style="right:780px;top:439.00px;font-size:12px;line-height:12px;font-weight:400;color:#6d6d6d;text-align:right;">0</div><div class="a" style="left:810px;top:436px;width:17px;height:19px;background:#a5cf2c;border:1px solid #a9d4f5"></div><svg style="left:810px;top:436px" width="17" height="19" viewBox="0 0 17 19"><path d="M3.2 15.5 L8.5 4.9 L13.8 15.5 M5.2 12.4 H11.8" fill="none" stroke="#fff" stroke-width="1.4"/></svg>
<div class="t" style="left:832px;top:440.00px;font-size:12px;line-height:12px;font-weight:400;color:#000;">€</div>
<div class="a" style="left:886px;top:435px;width:76px;height:22px;background:#f0f0f0;border:1px solid #e3e3e3;border-bottom:1px solid #8a8a8a;border-radius:2px"></div><div class="t" style="right:630px;top:439.00px;font-size:12px;line-height:12px;font-weight:400;color:#000;text-align:right;">0</div>
<div class="t" style="left:966px;top:440.00px;font-size:12px;line-height:12px;font-weight:400;color:#000;">€</div>
<div class="a" style="left:1021px;top:435px;width:75px;height:22px;background:#f0f0f0;border:1px solid #e3e3e3;border-bottom:1px solid #8a8a8a;border-radius:2px"></div><div class="t" style="right:496px;top:439.00px;font-size:12px;line-height:12px;font-weight:400;color:#000;text-align:right;">0</div>
<div class="t" style="left:1100px;top:440.00px;font-size:12px;line-height:12px;font-weight:400;color:#000;">€</div>
<div class="a" style="left:357px;top:477px;width:13px;height:13px;background:#fff;border:1px solid #8a8a8a;border-radius:3px"></div>
<div class="a" style="left:370px;top:476px;width:14px;height:14px;background:#a5cf2c"></div><svg style="left:370px;top:476px" width="14" height="14" viewBox="0 0 14 14"><path d="M1.7 13.0 L7.0 2.4 L12.3 13.0 M3.7 9.9 H10.3" fill="none" stroke="#fff" stroke-width="1.4"/></svg>
<div class="t" style="left:391.5px;top:478.00px;font-size:12px;line-height:12px;font-weight:400;color:#000;">Heizungsoptimierung</div>
<div class="a" style="left:618.0px;top:474.0px;width:13px;height:13px;border-radius:50%;background:#f8f8f8;border:1px solid #b8b8b8"></div>
<div class="a" style="left:678.0px;top:474.0px;width:13px;height:13px;border-radius:50%;background:#005fc4;"></div><div class="a" style="left:682.0px;top:478.0px;width:5px;height:5px;border-radius:50%;background:#fff"></div>
<div class="a" style="left:753px;top:470px;width:75px;height:22px;background:#f0f0f0;border:1px solid #e3e3e3;border-bottom:1px solid #8a8a8a;border-radius:2px"></div><div class="t" style="right:780px;top:474.00px;font-size:12px;line-height:12px;font-weight:400;color:#6d6d6d;text-align:right;">0</div><div class="a" style="left:810px;top:471px;width:17px;height:19px;background:#a5cf2c;border:1px solid #a9d4f5"></div><svg style="left:810px;top:471px" width="17" height="19" viewBox="0 0 17 19"><path d="M3.2 15.5 L8.5 4.9 L13.8 15.5 M5.2 12.4 H11.8" fill="none" stroke="#fff" stroke-width="1.4"/></svg>
<div class="t" style="left:832px;top:475.00px;font-size:12px;line-height:12px;font-weight:400;color:#000;">€</div>
<div class="a" style="left:886px;top:470px;width:76px;height:22px;background:#f0f0f0;border:1px solid #e3e3e3;border-bottom:1px solid #8a8a8a;border-radius:2px"></div><div class="t" style="right:630px;top:474.00px;font-size:12px;line-height:12px;font-weight:400;color:#000;text-align:right;">0</div>
<div class="t" style="left:966px;top:475.00px;font-size:12px;line-height:12px;font-weight:400;color:#000;">€</div>
<div class="a" style="left:1021px;top:470px;width:75px;height:22px;background:#f0f0f0;border:1px solid #e3e3e3;border-bottom:1px solid #8a8a8a;border-radius:2px"></div><div class="t" style="right:496px;top:474.00px;font-size:12px;line-height:12px;font-weight:400;color:#000;text-align:right;">0</div>
<div class="t" style="left:1100px;top:475.00px;font-size:12px;line-height:12px;font-weight:400;color:#000;">€</div>
<div class="a" style="left:357px;top:512px;width:13px;height:13px;background:#fff;border:1px solid #8a8a8a;border-radius:3px"></div>
<div class="a" style="left:370px;top:511px;width:14px;height:14px;background:#a5cf2c"></div><svg style="left:370px;top:511px" width="14" height="14" viewBox="0 0 14 14"><path d="M1.7 13.0 L7.0 2.4 L12.3 13.0 M3.7 9.9 H10.3" fill="none" stroke="#fff" stroke-width="1.4"/></svg>
<div class="t" style="left:391.5px;top:513.00px;font-size:12px;line-height:12px;font-weight:400;color:#000;">Emissionsminderung</div>
<div class="a" style="left:618.0px;top:509.0px;width:13px;height:13px;border-radius:50%;background:#f8f8f8;border:1px solid #b8b8b8"></div>
<div class="a" style="left:678.0px;top:509.0px;width:13px;height:13px;border-radius:50%;background:#005fc4;"></div><div class="a" style="left:682.0px;top:513.0px;width:5px;height:5px;border-radius:50%;background:#fff"></div>
<div class="a" style="left:753px;top:505px;width:75px;height:22px;background:#f0f0f0;border:1px solid #e3e3e3;border-bottom:1px solid #8a8a8a;border-radius:2px"></div><div class="t" style="right:780px;top:509.00px;font-size:12px;line-height:12px;font-weight:400;color:#6d6d6d;text-align:right;">0</div><div class="a" style="left:810px;top:506px;width:17px;height:19px;background:#a5cf2c;border:1px solid #a9d4f5"></div><svg style="left:810px;top:506px" width="17" height="19" viewBox="0 0 17 19"><path d="M3.2 15.5 L8.5 4.9 L13.8 15.5 M5.2 12.4 H11.8" fill="none" stroke="#fff" stroke-width="1.4"/></svg>
<div class="t" style="left:832px;top:510.00px;font-size:12px;line-height:12px;font-weight:400;color:#000;">€</div>
<div class="a" style="left:886px;top:505px;width:76px;height:22px;background:#f0f0f0;border:1px solid #e3e3e3;border-bottom:1px solid #8a8a8a;border-radius:2px"></div><div class="t" style="right:630px;top:509.00px;font-size:12px;line-height:12px;font-weight:400;color:#000;text-align:right;">0</div>
<div class="t" style="left:966px;top:510.00px;font-size:12px;line-height:12px;font-weight:400;color:#000;">€</div>
<div class="a" style="left:1021px;top:505px;width:75px;height:22px;background:#f0f0f0;border:1px solid #e3e3e3;border-bottom:1px solid #8a8a8a;border-radius:2px"></div><div class="t" style="right:496px;top:509.00px;font-size:12px;line-height:12px;font-weight:400;color:#000;text-align:right;">0</div>
<div class="t" style="left:1100px;top:510.00px;font-size:12px;line-height:12px;font-weight:400;color:#000;">€</div>
<div class="a" style="left:357px;top:547px;width:13px;height:13px;background:#005fc4;border-radius:3px"></div>
<svg style="left:357px;top:547px" width="13" height="13" viewBox="0 0 13 13"><path d="M3.3 6.8L5.5 9L10 4.3" fill="none" stroke="#fff" stroke-width="1.1"/></svg>
<div class="a" style="left:370px;top:546px;width:14px;height:14px;background:#a5cf2c"></div><svg style="left:370px;top:546px" width="14" height="14" viewBox="0 0 14 14"><path d="M1.7 13.0 L7.0 2.4 L12.3 13.0 M3.7 9.9 H10.3" fill="none" stroke="#fff" stroke-width="1.4"/></svg>
<div class="t" style="left:391.5px;top:548.00px;font-size:12px;line-height:12px;font-weight:400;color:#000;">Baubegleitung</div>
<div class="a" style="left:618.0px;top:544.0px;width:13px;height:13px;border-radius:50%;background:#f8f8f8;border:1px solid #b8b8b8"></div>
<div class="a" style="left:678.0px;top:544.0px;width:13px;height:13px;border-radius:50%;background:#005fc4;"></div><div class="a" style="left:682.0px;top:548.0px;width:5px;height:5px;border-radius:50%;background:#fff"></div>
<div class="a" style="left:753px;top:540px;width:75px;height:22px;background:#f0f0f0;border:1px solid #e3e3e3;border-bottom:1px solid #8a8a8a;border-radius:2px"></div><div class="t" style="right:780px;top:544.00px;font-size:12px;line-height:12px;font-weight:400;color:#6d6d6d;text-align:right;">4.000</div><div class="a" style="left:810px;top:541px;width:17px;height:19px;background:#a5cf2c;border:1px solid #a9d4f5"></div><svg style="left:810px;top:541px" width="17" height="19" viewBox="0 0 17 19"><path d="M3.2 15.5 L8.5 4.9 L13.8 15.5 M5.2 12.4 H11.8" fill="none" stroke="#fff" stroke-width="1.4"/></svg>
<div class="t" style="left:832px;top:545.00px;font-size:12px;line-height:12px;font-weight:400;color:#000;">€</div>
<div class="a" style="left:886px;top:540px;width:76px;height:22px;background:#f0f0f0;border:1px solid #e3e3e3;border-bottom:1px solid #8a8a8a;border-radius:2px"></div><div class="t" style="right:630px;top:544.00px;font-size:12px;line-height:12px;font-weight:400;color:#000;text-align:right;">4.000</div>
<div class="t" style="left:966px;top:545.00px;font-size:12px;line-height:12px;font-weight:400;color:#000;">€</div>
<div class="a" style="left:1021px;top:540px;width:75px;height:22px;background:#f0f0f0;border:1px solid #e3e3e3;border-bottom:1px solid #8a8a8a;border-radius:2px"></div><div class="t" style="right:496px;top:544.00px;font-size:12px;line-height:12px;font-weight:400;color:#000;text-align:right;">2.000</div>
<div class="t" style="left:1100px;top:545.00px;font-size:12px;line-height:12px;font-weight:400;color:#000;">€</div>
<div class="a" style="left:357px;top:582px;width:13px;height:13px;background:#fff;border:1px solid #8a8a8a;border-radius:3px"></div>
<div class="a" style="left:370px;top:581px;width:14px;height:14px;background:#a5cf2c"></div><svg style="left:370px;top:581px" width="14" height="14" viewBox="0 0 14 14"><path d="M1.7 13.0 L7.0 2.4 L12.3 13.0 M3.7 9.9 H10.3" fill="none" stroke="#fff" stroke-width="1.4"/></svg>
<div class="t" style="left:391.5px;top:583.00px;font-size:12px;line-height:12px;font-weight:400;color:#000;">Ergänzungskredit</div>
<div class="a" style="left:618.0px;top:579.0px;width:13px;height:13px;border-radius:50%;background:#005fc4;"></div><div class="a" style="left:622.0px;top:583.0px;width:5px;height:5px;border-radius:50%;background:#fff"></div>
<div class="a" style="left:678.0px;top:579.0px;width:13px;height:13px;border-radius:50%;background:#f8f8f8;border:1px solid #b8b8b8"></div>
<div class="a" style="left:753px;top:575px;width:75px;height:22px;background:#f0f0f0;border:1px solid #e3e3e3;border-bottom:1px solid #8a8a8a;border-radius:2px"></div><div class="t" style="right:780px;top:579.00px;font-size:12px;line-height:12px;font-weight:400;color:#6d6d6d;text-align:right;">174.824</div><div class="a" style="left:810px;top:576px;width:17px;height:19px;background:#a5cf2c;border:1px solid #a9d4f5"></div><svg style="left:810px;top:576px" width="17" height="19" viewBox="0 0 17 19"><path d="M3.2 15.5 L8.5 4.9 L13.8 15.5 M5.2 12.4 H11.8" fill="none" stroke="#fff" stroke-width="1.4"/></svg>
<div class="t" style="left:832px;top:580.00px;font-size:12px;line-height:12px;font-weight:400;color:#000;">€</div>
<div class="a" style="left:886px;top:575px;width:76px;height:22px;background:#f0f0f0;border:1px solid #e3e3e3;border-bottom:1px solid #8a8a8a;border-radius:2px"></div><div class="t" style="right:630px;top:579.00px;font-size:12px;line-height:12px;font-weight:400;color:#000;text-align:right;">138.659</div>
<div class="t" style="left:966px;top:580.00px;font-size:12px;line-height:12px;font-weight:400;color:#000;">€</div>
<div class="a" style="left:1021px;top:575px;width:75px;height:22px;background:#f0f0f0;border:1px solid #e3e3e3;border-bottom:1px solid #8a8a8a;border-radius:2px"></div><div class="t" style="right:496px;top:579.00px;font-size:12px;line-height:12px;font-weight:400;color:#000;text-align:right;">-3.395</div>
<div class="t" style="left:1100px;top:580.00px;font-size:12px;line-height:12px;font-weight:400;color:#000;">€</div>
<div class="t" style="left:976px;top:614.00px;font-size:12px;line-height:12px;font-weight:400;color:#000;">Summe</div>
<div class="a" style="left:1021px;top:610px;width:75px;height:22px;background:#f0f0f0;border:1px solid #e3e3e3;border-bottom:1px solid #8a8a8a;border-radius:2px"></div><div class="t" style="right:496px;top:614.00px;font-size:12px;line-height:12px;font-weight:400;color:#000;text-align:right;">36.165</div>
<div class="t" style="left:1100px;top:615.00px;font-size:12px;line-height:12px;font-weight:400;color:#000;">€</div>
<div class="a" style="left:351px;top:658px;width:1008px;height:6px;background:#b4b4b4"></div>
<div class="a" style="left:351px;top:664px;width:72px;height:38px;background:#aad233"></div>
<div class="a" style="left:423px;top:664px;width:936px;height:38px;background:#f2f2f2"></div>
<div class="t" style="left:431.5px;top:677.00px;font-size:12px;line-height:12px;font-weight:700;color:#000;">Fördermittel</div>
<svg style="left:359px;top:671px" width="21" height="22" viewBox="0 0 21 22"><rect x="0" y="0" width="21" height="21.5" rx="1.5" fill="#0a0a14"/><rect x="2.5" y="0.5" width="15.5" height="2.8" fill="#c8262b"/><rect x="2.5" y="3.3" width="15.5" height="7.5" fill="#fff"/><rect x="7.5" y="13.5" width="10" height="8" fill="#d8d8d8"/><rect x="9" y="15" width="4" height="4" fill="#0a0a14"/></svg>
<svg style="left:393px;top:670px" width="25" height="25" viewBox="0 0 25 25"><path d="M1 1H6V19H1Z M4.5 2H9V21H4.5Z M8 3H12V23H8Z" fill="#fff" stroke="#000" stroke-width="1.4"/><path d="M11 5H18L23.5 10.5V24H11Z" fill="#fff" stroke="#000" stroke-width="1.6"/><path d="M14 8H17M14 11.5H20M14 14.5H21M14 17.5H21M14 20.5H19" stroke="#000" stroke-width="1.4"/></svg>
<div class="a" style="left:1365px;top:86px;width:196px;height:20px;background:#fff"></div>
<div class="t" style="left:1369.5px;top:91.00px;font-size:12px;line-height:12px;font-weight:400;color:#000;letter-spacing:-0.2px">Wärmedämmung, Fenster, Lüftu</div>
<svg style="left:1549px;top:95px" width="9" height="5" viewBox="0 0 9 5"><path d="M0.5 0.5L4.5 4.5L8.5 0.5" fill="none" stroke="#444" stroke-width="1"/></svg>
<div class="a" style="left:1563px;top:86px;width:21px;height:20px;border:1.5px solid #1f5fb5;border-radius:3px;background:#a5cf2c"></div>
<svg style="left:1563px;top:86px" width="21" height="20" viewBox="0 0 21 20"><path d="M4.5 18L10.5 3.5L16.5 18M7 12.5H14" fill="none" stroke="#fff" stroke-width="1.5"/></svg>
<div class="a" style="left:1570px;top:106px;width:15px;height:806px;background:#fafafa"></div>
<div class="a" style="left:1586px;top:0px;width:1px;height:939px;background:#e4e8ee"></div>
<div class="a" style="left:1585px;top:6px;width:1px;height:931px;background:#a0a0a0"></div>
<svg style="left:1573px;top:111px" width="10" height="7" viewBox="0 0 10 7"><path d="M5 0.5L9.5 6.5H0.5Z" fill="#8a8a8a"/></svg>
<div class="a" style="left:1573px;top:124px;width:9px;height:763px;background:#8a8a8a;border-radius:4.5px"></div>
<svg style="left:1573px;top:902px" width="10" height="7" viewBox="0 0 10 7"><path d="M5 6.5L9.5 0.5H0.5Z" fill="#8a8a8a"/></svg>
<div class="a" style="left:1365px;top:106px;width:205px;height:806px;background:#fff;border:2px solid #777;border-bottom:0"></div>
<div class="a" style="left:1367px;top:441px;width:201px;height:4.5px;background:#777"></div>
<div class="a" style="left:1367px;top:549px;width:201px;height:4.5px;background:#777"></div>
<div class="a" style="left:1367px;top:622px;width:201px;height:4.5px;background:#777"></div>
<div class="a" style="left:1367px;top:708px;width:201px;height:4.5px;background:#777"></div>
<div class="a" style="left:1367px;top:810px;width:201px;height:4.5px;background:#777"></div>
<div class="t" style="left:1375.5px;top:118.00px;font-size:17.3px;line-height:17.3px;font-weight:400;color:#111;">GEG 2024</div>
<div class="t" style="left:1375.5px;top:138.00px;font-size:12.5px;line-height:12.5px;font-weight:400;color:#111;letter-spacing:0.15px">DIN V 18599</div>
<div class="a" style="left:1535px;top:119px;width:18px;height:18px;border-radius:50%;background:#b8282a;border:1px solid #8a2a20"></div>
<div class="a" style="left:1381px;top:157px;width:171px;height:132px;background:#fff;box-shadow:0.5px 1px 2px rgba(0,0,0,0.4)"></div>
<div class="a" style="left:1381px;top:157px;width:14px;height:132px;background:#d4d4d4"></div>
<div class="a" style="left:1398px;top:157px;width:154px;height:132px;background:#edb240"></div>
<div class="t" style="left:1347.5px;top:216px;width:80px;height:12px;line-height:12px;text-align:center;font-size:9px;color:#111;transform:rotate(-90deg)">Effizienzklasse</div>
<div class="t" style="left:1434px;top:160px;font-size:128px;line-height:128px;transform:scaleX(0.955);transform-origin:11px 0;color:#fff;text-shadow:1px 1px 1px rgba(80,50,0,0.45)">E</div>
<div class="t" style="left:1437.5px;top:273.00px;font-size:12.7px;line-height:12.7px;font-weight:700;color:#fff;text-shadow:1px 1px 1px rgba(0,0,0,0.55)">136,3 kWh/(m²a)</div>
<div class="a" style="left:1381px;top:295px;width:171px;height:50px;background:#fff;box-shadow:0.5px 1px 2px rgba(0,0,0,0.4)"></div>
<div class="a" style="left:1381px;top:295px;width:14px;height:50px;background:#d4d4d4"></div>
<div class="a" style="left:1398px;top:295px;width:92px;height:16px;background:#d4d4d4"></div>
<div class="a" style="left:1398px;top:311px;width:129px;height:17px;background:#4682b4"></div>
<div class="a" style="left:1398px;top:328px;width:154px;height:17px;background:linear-gradient(to right,#3f8f1a 0%,#a6d03c 27%,#f8d83a 45%,#eaa23a 70%,#c8302a 100%)"></div>
<div class="t" style="left:1347.5px;top:314px;width:80px;height:12px;line-height:12px;text-align:center;font-size:9px;color:#111;transform:rotate(-90deg)">Q<sub style='font-size:6px'>P</sub></div>
<div class="t" style="left:1403px;top:299.00px;font-size:8.8px;line-height:8.8px;font-weight:400;color:#111;">77,5 kWh/(m²a)</div>
<div class="t" style="left:1403px;top:316.00px;font-size:8.8px;line-height:8.8px;font-weight:400;color:#111;">108,5 kWh/(m²a)</div>
<div class="t" style="left:1403px;top:333.00px;font-size:8.8px;line-height:8.8px;font-weight:400;color:#111;">153,5 kWh/(m²a)</div>
<div class="a" style="left:1381px;top:351px;width:171px;height:50px;background:#fff;box-shadow:0.5px 1px 2px rgba(0,0,0,0.4)"></div>
<div class="a" style="left:1381px;top:351px;width:14px;height:50px;background:#d4d4d4"></div>
<div class="a" style="left:1398px;top:351px;width:78px;height:16px;background:#d4d4d4"></div>
<div class="a" style="left:1398px;top:367px;width:138px;height:17px;background:#4682b4"></div>
<div class="a" style="left:1398px;top:384px;width:105px;height:17px;background:linear-gradient(to right,#3f8f1a 0%,#a6d03c 39%,#f8d83a 66%,#eaa23a 100%)"></div>
<div class="t" style="left:1347.5px;top:370px;width:80px;height:12px;line-height:12px;text-align:center;font-size:9px;color:#111;transform:rotate(-90deg)">HT</div>
<div class="t" style="left:1403px;top:355.00px;font-size:8.8px;line-height:8.8px;font-weight:400;color:#111;">0,40 W/(m²K)</div>
<div class="t" style="left:1403px;top:372.00px;font-size:8.8px;line-height:8.8px;font-weight:400;color:#111;">0,70 W/(m²K)</div>
<div class="t" style="left:1403px;top:389.00px;font-size:8.8px;line-height:8.8px;font-weight:400;color:#111;">0,53 W/(m²K)</div>
<div class="a" style="left:1381px;top:408px;width:171px;height:18px;background:#fff;box-shadow:0.5px 1px 2px rgba(0,0,0,0.4)"></div>
<div class="a" style="left:1381px;top:408px;width:14px;height:18px;background:#d4d4d4"></div>
<div class="t" style="left:1347.5px;top:411px;width:80px;height:12px;line-height:12px;text-align:center;font-size:9px;color:#111;transform:rotate(-90deg)">EH</div>
<div class="a" style="left:1398px;top:408px;width:34px;height:18px;background:#b8282a"></div>
<div class="t" style="right:156px;top:412.00px;font-size:9.5px;line-height:9.5px;font-weight:700;color:#fff;text-align:right;">40</div>
<div class="a" style="left:1434px;top:408px;width:13px;height:18px;background:#b8282a"></div>
<div class="t" style="right:141px;top:412.00px;font-size:9.5px;line-height:9.5px;font-weight:700;color:#fff;text-align:right;">55</div>
<div class="a" style="left:1449px;top:408px;width:12px;height:18px;background:#b8282a"></div>
<div class="t" style="right:127px;top:412.00px;font-size:9.5px;line-height:9.5px;font-weight:700;color:#fff;text-align:right;">70</div>
<div class="a" style="left:1463px;top:408px;width:13px;height:18px;background:#b8282a"></div>
<div class="t" style="right:112px;top:412.00px;font-size:9.5px;line-height:9.5px;font-weight:700;color:#fff;text-align:right;">85</div>
<div class="a" style="left:1478px;top:408px;width:71px;height:18px;background:#b8282a"></div>
<div class="t" style="right:39px;top:412.00px;font-size:9.5px;line-height:9.5px;font-weight:700;color:#fff;text-align:right;">160</div>
<div class="t" style="left:1376px;top:455.00px;font-size:17.3px;line-height:17.3px;font-weight:400;color:#111;">Erneuerbare</div>
<div class="t" style="left:1376px;top:476.00px;font-size:17.3px;line-height:17.3px;font-weight:400;color:#111;">Energien</div>
<div class="a" style="left:1535px;top:457px;width:18px;height:18px;border-radius:50%;border:1.5px solid #111;background:#fff"></div>
<div class="a" style="left:1381px;top:499px;width:171px;height:33px;background:#fff;box-shadow:0.5px 1px 2px rgba(0,0,0,0.4)"></div>
<div class="a" style="left:1381px;top:499px;width:14px;height:33px;background:#d4d4d4"></div>
<div class="a" style="left:1398px;top:499px;width:100px;height:17px;background:#d4d4d4"></div>
<div class="t" style="left:1347.5px;top:509px;width:80px;height:12px;line-height:12px;text-align:center;font-size:9px;color:#111;transform:rotate(-90deg)">EE</div>
<div class="t" style="left:1403px;top:503.00px;font-size:8.8px;line-height:8.8px;font-weight:400;color:#111;">65 %</div>
<div class="t" style="left:1403px;top:519.00px;font-size:8.8px;line-height:8.8px;font-weight:400;color:#111;">0 %</div>
<div class="t" style="left:1376px;top:563.00px;font-size:17.3px;line-height:17.3px;font-weight:400;color:#111;">Sommerlicher</div>
<div class="t" style="left:1376px;top:584.00px;font-size:17.3px;line-height:17.3px;font-weight:400;color:#111;">Wärmeschutz</div>
<div class="t" style="left:1375.5px;top:604.00px;font-size:12.5px;line-height:12.5px;font-weight:400;color:#111;letter-spacing:0.15px">DIN 4108-2</div>
<div class="a" style="left:1535px;top:564px;width:18px;height:18px;border-radius:50%;border:1.5px solid #111;background:#fff"></div>
<div class="t" style="left:1376px;top:636.00px;font-size:17.3px;line-height:17.3px;font-weight:400;color:#111;">Heizlast</div>
<div class="t" style="left:1375.5px;top:656.00px;font-size:12.5px;line-height:12.5px;font-weight:400;color:#111;letter-spacing:0.15px">DIN 12831</div>
<div class="a" style="left:1381px;top:675px;width:171px;height:17px;background:#fff;box-shadow:0.5px 1px 2px rgba(0,0,0,0.4)"></div>
<div class="a" style="left:1381px;top:675px;width:14px;height:17px;background:#d4d4d4"></div>
<svg style="left:1384px;top:680px" width="8" height="7" viewBox="0 0 8 7"><ellipse cx="4" cy="3.5" rx="3.3" ry="2.8" fill="none" stroke="#111" stroke-width="1.2"/><path d="M0.5 3.5H7.5" stroke="#111" stroke-width="1.2"/></svg>
<div class="t" style="left:1403px;top:679.00px;font-size:8.8px;line-height:8.8px;font-weight:400;color:#111;">15,2 kW</div>
<div class="t" style="left:1375.5px;top:722.00px;font-size:17.3px;line-height:17.3px;font-weight:400;color:#111;">Lüftungskonzept</div>
<div class="t" style="left:1375.5px;top:742.00px;font-size:12.5px;line-height:12.5px;font-weight:400;color:#111;letter-spacing:0.15px">DIN 1946-6</div>
<div class="a" style="left:1535px;top:723px;width:18px;height:18px;border-radius:50%;background:#78b22e"></div>
<div class="a" style="left:1381px;top:761px;width:171px;height:33px;background:#fff;box-shadow:0.5px 1px 2px rgba(0,0,0,0.4)"></div>
<div class="a" style="left:1381px;top:761px;width:14px;height:33px;background:#d4d4d4"></div>
<div class="a" style="left:1398px;top:761px;width:77px;height:16px;background:#d4d4d4"></div>
<div class="a" style="left:1398px;top:777px;width:20px;height:17px;background:#4682b4"></div>
<div class="t" style="left:1347.5px;top:771px;width:80px;height:12px;line-height:12px;text-align:center;font-size:9px;color:#111;transform:rotate(-90deg)">inf min</div>
<div class="t" style="left:1403px;top:765.00px;font-size:8.8px;line-height:8.8px;font-weight:400;color:#111;">51 m³/h</div>
<div class="t" style="left:1403px;top:782.00px;font-size:8.8px;line-height:8.8px;font-weight:400;color:#111;">13 m³/h</div>
<div class="t" style="left:1375.5px;top:824.00px;font-size:17.3px;line-height:17.3px;font-weight:400;color:#111;">Beratung</div>
<div class="t" style="left:1375.5px;top:844.00px;font-size:12.5px;line-height:12.5px;font-weight:400;color:#111;letter-spacing:0.15px">DIN V 18599</div>
<div class="a" style="left:1381px;top:863px;width:171px;height:17px;background:#fff;box-shadow:0.5px 1px 2px rgba(0,0,0,0.4)"></div>
<div class="a" style="left:1381px;top:863px;width:14px;height:17px;background:#d4d4d4"></div>
<div class="a" style="left:1398px;top:863px;width:77px;height:17px;background:linear-gradient(to right,#3f8f1a 0%,#a6d03c 60%,#f8d83a 100%)"></div>
<div class="t" style="left:1347.5px;top:865px;width:80px;height:12px;line-height:12px;text-align:center;font-size:9px;color:#111;transform:rotate(-90deg)">Q<sub style='font-size:6px'>E</sub></div>
<div class="t" style="left:1403px;top:867.00px;font-size:8.8px;line-height:8.8px;font-weight:400;color:#111;">100,0 kWh/(m²a)</div>
<div class="a" style="left:1381px;top:886px;width:171px;height:17px;background:#fff;box-shadow:0.5px 1px 2px rgba(0,0,0,0.4)"></div>
<div class="a" style="left:1381px;top:886px;width:14px;height:17px;background:#d4d4d4"></div>
<div class="a" style="left:1398px;top:886px;width:63px;height:17px;background:linear-gradient(to right,#3f8f1a 0%,#a6d03c 70%,#f8d83a 100%)"></div>
<div class="t" style="left:1347.5px;top:888px;width:80px;height:12px;line-height:12px;text-align:center;font-size:9px;color:#111;transform:rotate(-90deg)">CO<sub style='font-size:6px'>2</sub></div>
<div class="t" style="left:1403px;top:890.00px;font-size:8.8px;line-height:8.8px;font-weight:400;color:#111;">32,58 kg/(m²a)</div>
</body></html>
